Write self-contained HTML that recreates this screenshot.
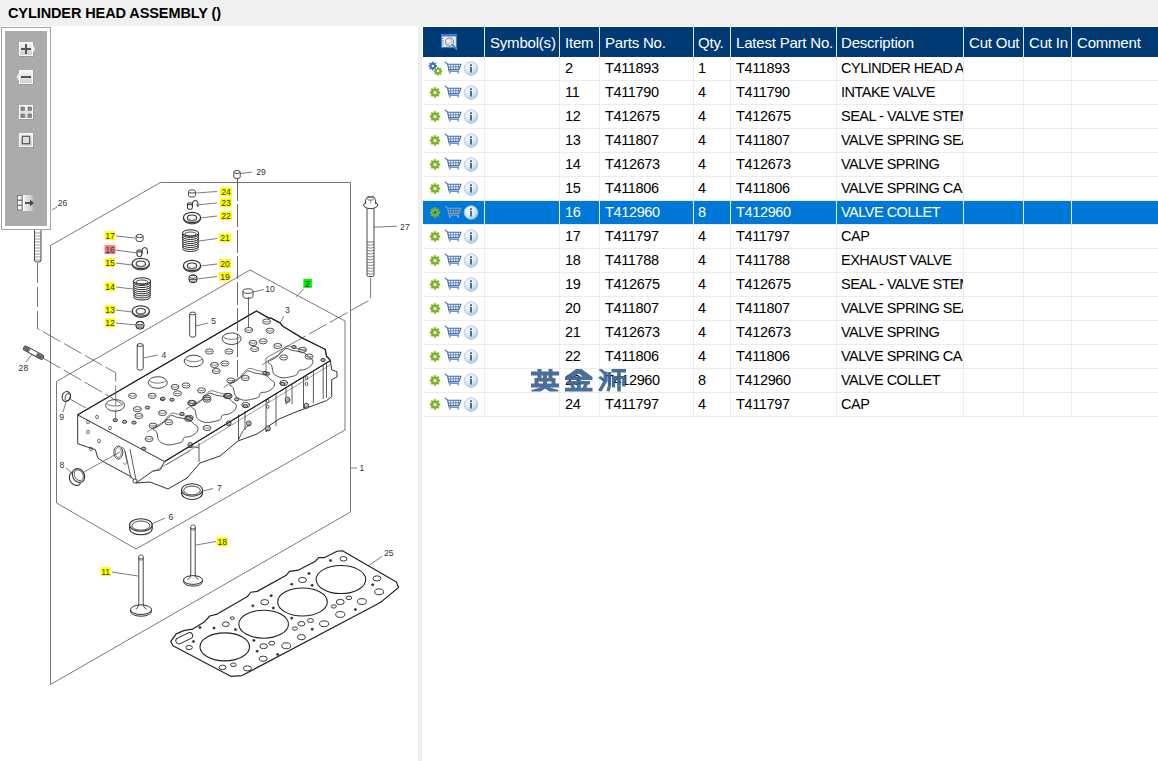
<!DOCTYPE html>
<html><head><meta charset="utf-8">
<style>
*{margin:0;padding:0;box-sizing:border-box}
html,body{width:1158px;height:761px;overflow:hidden;background:#fff;font-family:"Liberation Sans",sans-serif}
.a{position:absolute}
.t{position:absolute;white-space:nowrap;font-size:14.5px;line-height:16px;color:#000;letter-spacing:-0.35px}
.h{position:absolute;white-space:nowrap;font-size:15px;line-height:16px;color:#fff;letter-spacing:-0.2px}
</style></head><body>

<div class="a" style="left:0;top:0;width:1158px;height:26px;background:#f0f0f0"></div>
<div class="t" style="left:8px;top:5px;font-size:14.5px;font-weight:bold;letter-spacing:-0.1px">CYLINDER HEAD ASSEMBLY ()</div>
<div class="a" style="left:418px;top:26px;width:4px;height:735px;background:#efefef"></div>
<div class="a" style="left:423px;top:27px;width:735px;height:30px;background:#003a75"></div>
<div class="a" style="left:484px;top:27px;width:1px;height:30px;background:#dfe6ef"></div>
<div class="a" style="left:559px;top:27px;width:1px;height:30px;background:#dfe6ef"></div>
<div class="a" style="left:599px;top:27px;width:1px;height:30px;background:#dfe6ef"></div>
<div class="a" style="left:693px;top:27px;width:1px;height:30px;background:#dfe6ef"></div>
<div class="a" style="left:730px;top:27px;width:1px;height:30px;background:#dfe6ef"></div>
<div class="a" style="left:836px;top:27px;width:1px;height:30px;background:#dfe6ef"></div>
<div class="a" style="left:963px;top:27px;width:1px;height:30px;background:#dfe6ef"></div>
<div class="a" style="left:1023px;top:27px;width:1px;height:30px;background:#dfe6ef"></div>
<div class="a" style="left:1071px;top:27px;width:1px;height:30px;background:#dfe6ef"></div>
<div class="a" style="left:423px;top:80px;width:735px;height:1px;background:#ececec"></div>
<div class="a" style="left:423px;top:104px;width:735px;height:1px;background:#ececec"></div>
<div class="a" style="left:423px;top:128px;width:735px;height:1px;background:#ececec"></div>
<div class="a" style="left:423px;top:152px;width:735px;height:1px;background:#ececec"></div>
<div class="a" style="left:423px;top:176px;width:735px;height:1px;background:#ececec"></div>
<div class="a" style="left:423px;top:200px;width:735px;height:1px;background:#ececec"></div>
<div class="a" style="left:423px;top:201px;width:735px;height:23px;background:#0078d7"></div>
<div class="a" style="left:423px;top:224px;width:735px;height:1px;background:#ececec"></div>
<div class="a" style="left:423px;top:248px;width:735px;height:1px;background:#ececec"></div>
<div class="a" style="left:423px;top:272px;width:735px;height:1px;background:#ececec"></div>
<div class="a" style="left:423px;top:296px;width:735px;height:1px;background:#ececec"></div>
<div class="a" style="left:423px;top:320px;width:735px;height:1px;background:#ececec"></div>
<div class="a" style="left:423px;top:344px;width:735px;height:1px;background:#ececec"></div>
<div class="a" style="left:423px;top:368px;width:735px;height:1px;background:#ececec"></div>
<div class="a" style="left:423px;top:392px;width:735px;height:1px;background:#ececec"></div>
<div class="a" style="left:423px;top:416px;width:735px;height:1px;background:#ececec"></div>
<div class="a" style="left:484px;top:57px;width:1px;height:360px;background:#ececec"></div>
<div class="a" style="left:559px;top:57px;width:1px;height:360px;background:#ececec"></div>
<div class="a" style="left:599px;top:57px;width:1px;height:360px;background:#ececec"></div>
<div class="a" style="left:693px;top:57px;width:1px;height:360px;background:#ececec"></div>
<div class="a" style="left:730px;top:57px;width:1px;height:360px;background:#ececec"></div>
<div class="a" style="left:836px;top:57px;width:1px;height:360px;background:#ececec"></div>
<div class="a" style="left:963px;top:57px;width:1px;height:360px;background:#ececec"></div>
<div class="a" style="left:1023px;top:57px;width:1px;height:360px;background:#ececec"></div>
<div class="a" style="left:1071px;top:57px;width:1px;height:360px;background:#ececec"></div>
<div class="a" style="left:484px;top:201px;width:1px;height:23px;background:#e6f0fa"></div>
<div class="a" style="left:559px;top:201px;width:1px;height:23px;background:#e6f0fa"></div>
<div class="a" style="left:599px;top:201px;width:1px;height:23px;background:#e6f0fa"></div>
<div class="a" style="left:693px;top:201px;width:1px;height:23px;background:#e6f0fa"></div>
<div class="a" style="left:730px;top:201px;width:1px;height:23px;background:#e6f0fa"></div>
<div class="a" style="left:836px;top:201px;width:1px;height:23px;background:#e6f0fa"></div>
<div class="a" style="left:963px;top:201px;width:1px;height:23px;background:#e6f0fa"></div>
<div class="a" style="left:1023px;top:201px;width:1px;height:23px;background:#e6f0fa"></div>
<div class="a" style="left:1071px;top:201px;width:1px;height:23px;background:#e6f0fa"></div>
<div class="h" style="left:490px;top:34.5px">Symbol(s)</div>
<div class="h" style="left:565px;top:34.5px">Item</div>
<div class="h" style="left:605px;top:34.5px">Parts No.</div>
<div class="h" style="left:698px;top:34.5px">Qty.</div>
<div class="h" style="left:736px;top:34.5px">Latest Part No.</div>
<div class="h" style="left:841px;top:34.5px">Description</div>
<div class="h" style="left:969px;top:34.5px">Cut Out</div>
<div class="h" style="left:1029px;top:34.5px">Cut In</div>
<div class="h" style="left:1077px;top:34.5px">Comment</div>
<div class="t" style="left:565px;top:59.6px;color:#000">2</div>
<div class="t" style="left:605px;top:59.6px;color:#000">T411893</div>
<div class="t" style="left:698px;top:59.6px;color:#000">1</div>
<div class="t" style="left:736px;top:59.6px;color:#000">T411893</div>
<div class="t" style="left:841px;top:59.6px;width:122px;overflow:hidden;letter-spacing:-0.5px;color:#000">CYLINDER HEAD ASSEMBLY</div>
<div class="t" style="left:565px;top:83.6px;color:#000">11</div>
<div class="t" style="left:605px;top:83.6px;color:#000">T411790</div>
<div class="t" style="left:698px;top:83.6px;color:#000">4</div>
<div class="t" style="left:736px;top:83.6px;color:#000">T411790</div>
<div class="t" style="left:841px;top:83.6px;width:122px;overflow:hidden;letter-spacing:-0.5px;color:#000">INTAKE VALVE</div>
<div class="t" style="left:565px;top:107.6px;color:#000">12</div>
<div class="t" style="left:605px;top:107.6px;color:#000">T412675</div>
<div class="t" style="left:698px;top:107.6px;color:#000">4</div>
<div class="t" style="left:736px;top:107.6px;color:#000">T412675</div>
<div class="t" style="left:841px;top:107.6px;width:122px;overflow:hidden;letter-spacing:-0.5px;color:#000">SEAL - VALVE STEM</div>
<div class="t" style="left:565px;top:131.6px;color:#000">13</div>
<div class="t" style="left:605px;top:131.6px;color:#000">T411807</div>
<div class="t" style="left:698px;top:131.6px;color:#000">4</div>
<div class="t" style="left:736px;top:131.6px;color:#000">T411807</div>
<div class="t" style="left:841px;top:131.6px;width:122px;overflow:hidden;letter-spacing:-0.5px;color:#000">VALVE SPRING SEAT</div>
<div class="t" style="left:565px;top:155.6px;color:#000">14</div>
<div class="t" style="left:605px;top:155.6px;color:#000">T412673</div>
<div class="t" style="left:698px;top:155.6px;color:#000">4</div>
<div class="t" style="left:736px;top:155.6px;color:#000">T412673</div>
<div class="t" style="left:841px;top:155.6px;width:122px;overflow:hidden;letter-spacing:-0.5px;color:#000">VALVE SPRING</div>
<div class="t" style="left:565px;top:179.6px;color:#000">15</div>
<div class="t" style="left:605px;top:179.6px;color:#000">T411806</div>
<div class="t" style="left:698px;top:179.6px;color:#000">4</div>
<div class="t" style="left:736px;top:179.6px;color:#000">T411806</div>
<div class="t" style="left:841px;top:179.6px;width:122px;overflow:hidden;letter-spacing:-0.5px;color:#000">VALVE SPRING CAP</div>
<div class="t" style="left:565px;top:203.6px;color:#fff">16</div>
<div class="t" style="left:605px;top:203.6px;color:#fff">T412960</div>
<div class="t" style="left:698px;top:203.6px;color:#fff">8</div>
<div class="t" style="left:736px;top:203.6px;color:#fff">T412960</div>
<div class="t" style="left:841px;top:203.6px;width:122px;overflow:hidden;letter-spacing:-0.5px;color:#fff">VALVE COLLET</div>
<div class="t" style="left:565px;top:227.6px;color:#000">17</div>
<div class="t" style="left:605px;top:227.6px;color:#000">T411797</div>
<div class="t" style="left:698px;top:227.6px;color:#000">4</div>
<div class="t" style="left:736px;top:227.6px;color:#000">T411797</div>
<div class="t" style="left:841px;top:227.6px;width:122px;overflow:hidden;letter-spacing:-0.5px;color:#000">CAP</div>
<div class="t" style="left:565px;top:251.6px;color:#000">18</div>
<div class="t" style="left:605px;top:251.6px;color:#000">T411788</div>
<div class="t" style="left:698px;top:251.6px;color:#000">4</div>
<div class="t" style="left:736px;top:251.6px;color:#000">T411788</div>
<div class="t" style="left:841px;top:251.6px;width:122px;overflow:hidden;letter-spacing:-0.5px;color:#000">EXHAUST VALVE</div>
<div class="t" style="left:565px;top:275.6px;color:#000">19</div>
<div class="t" style="left:605px;top:275.6px;color:#000">T412675</div>
<div class="t" style="left:698px;top:275.6px;color:#000">4</div>
<div class="t" style="left:736px;top:275.6px;color:#000">T412675</div>
<div class="t" style="left:841px;top:275.6px;width:122px;overflow:hidden;letter-spacing:-0.5px;color:#000">SEAL - VALVE STEM</div>
<div class="t" style="left:565px;top:299.6px;color:#000">20</div>
<div class="t" style="left:605px;top:299.6px;color:#000">T411807</div>
<div class="t" style="left:698px;top:299.6px;color:#000">4</div>
<div class="t" style="left:736px;top:299.6px;color:#000">T411807</div>
<div class="t" style="left:841px;top:299.6px;width:122px;overflow:hidden;letter-spacing:-0.5px;color:#000">VALVE SPRING SEAT</div>
<div class="t" style="left:565px;top:323.6px;color:#000">21</div>
<div class="t" style="left:605px;top:323.6px;color:#000">T412673</div>
<div class="t" style="left:698px;top:323.6px;color:#000">4</div>
<div class="t" style="left:736px;top:323.6px;color:#000">T412673</div>
<div class="t" style="left:841px;top:323.6px;width:122px;overflow:hidden;letter-spacing:-0.5px;color:#000">VALVE SPRING</div>
<div class="t" style="left:565px;top:347.6px;color:#000">22</div>
<div class="t" style="left:605px;top:347.6px;color:#000">T411806</div>
<div class="t" style="left:698px;top:347.6px;color:#000">4</div>
<div class="t" style="left:736px;top:347.6px;color:#000">T411806</div>
<div class="t" style="left:841px;top:347.6px;width:122px;overflow:hidden;letter-spacing:-0.5px;color:#000">VALVE SPRING CAP</div>
<div class="t" style="left:565px;top:371.6px;color:#000">23</div>
<div class="t" style="left:605px;top:371.6px;color:#000">T412960</div>
<div class="t" style="left:698px;top:371.6px;color:#000">8</div>
<div class="t" style="left:736px;top:371.6px;color:#000">T412960</div>
<div class="t" style="left:841px;top:371.6px;width:122px;overflow:hidden;letter-spacing:-0.5px;color:#000">VALVE COLLET</div>
<div class="t" style="left:565px;top:395.6px;color:#000">24</div>
<div class="t" style="left:605px;top:395.6px;color:#000">T411797</div>
<div class="t" style="left:698px;top:395.6px;color:#000">4</div>
<div class="t" style="left:736px;top:395.6px;color:#000">T411797</div>
<div class="t" style="left:841px;top:395.6px;width:122px;overflow:hidden;letter-spacing:-0.5px;color:#000">CAP</div>
<svg class="a" style="left:0;top:0" width="1158" height="761" viewBox="0 0 1158 761"><defs>
<radialGradient id="ig" cx="0.4" cy="0.35" r="0.7"><stop offset="0" stop-color="#ffffff"/><stop offset="0.6" stop-color="#dbe7f3"/><stop offset="1" stop-color="#9fbfdf"/></radialGradient>
<linearGradient id="bg" x1="0" y1="0" x2="0" y2="1"><stop offset="0" stop-color="#f6f6f6"/><stop offset="1" stop-color="#cfcfcf"/></linearGradient>
<linearGradient id="fade" x1="0" y1="0" x2="1" y2="0"><stop offset="0" stop-color="#f4f4f4"/><stop offset="0.7" stop-color="#d0d0d0"/><stop offset="1" stop-color="#ababab"/></linearGradient>
</defs>
<path d="M437.02,65.16 L437.02,66.84 L435.86,66.93 L435.62,67.51 L436.38,68.39 L435.19,69.58 L434.31,68.82 L433.73,69.06 L433.64,70.22 L431.96,70.22 L431.87,69.06 L431.29,68.82 L430.41,69.58 L429.22,68.39 L429.98,67.51 L429.74,66.93 L428.58,66.84 L428.58,65.16 L429.74,65.07 L429.98,64.49 L429.22,63.61 L430.41,62.42 L431.29,63.18 L431.87,62.94 L431.96,61.78 L433.64,61.78 L433.73,62.94 L434.31,63.18 L435.19,62.42 L436.38,63.61 L435.62,64.49 L435.86,65.07Z" fill="#2f6fd8"/><circle cx="432.8" cy="66.0" r="1.3" fill="#fff"/>
<path d="M442.22,70.46 L442.22,72.14 L441.06,72.23 L440.82,72.81 L441.58,73.69 L440.39,74.88 L439.51,74.12 L438.93,74.36 L438.84,75.52 L437.16,75.52 L437.07,74.36 L436.49,74.12 L435.61,74.88 L434.42,73.69 L435.18,72.81 L434.94,72.23 L433.78,72.14 L433.78,70.46 L434.94,70.37 L435.18,69.79 L434.42,68.91 L435.61,67.72 L436.49,68.48 L437.07,68.24 L437.16,67.08 L438.84,67.08 L438.93,68.24 L439.51,68.48 L440.39,67.72 L441.58,68.91 L440.82,69.79 L441.06,70.37Z" fill="#73b022"/><circle cx="438" cy="71.0" r="1.3" fill="#fff"/>
<g fill="none" stroke="#3f6fa6" stroke-width="1.1" stroke-linejoin="round"><path d="M445,61.8 L447.6,64.2 L449.2,71.3 L459.2,71.3"/><path d="M447.4,64.2 L461,64.2 L458.8,69.6 L448.7,69.6"/><path d="M448,66.9 H460 M450.6,64.4 V69.4 M453.2,64.4 V69.4 M455.8,64.4 V69.4 M458.3,64.4 V68.8" stroke-width="0.8"/><path d="M449.8,71.8 v1.6 M458.2,71.8 v1.6" stroke-width="1.6" stroke="#6f9fd6"/></g>
<circle cx="471" cy="68.5" r="6.8" fill="url(#ig)" stroke="#a9c5e2" stroke-width="0.8"/><rect x="470" y="64.3" width="2" height="1.8" fill="#3d6da3"/><rect x="470" y="66.9" width="2" height="5.6" fill="#3d6da3"/>
<path d="M440.20,91.47 L440.20,93.53 L438.83,93.66 L438.53,94.39 L439.41,95.44 L437.94,96.91 L436.89,96.03 L436.16,96.33 L436.03,97.70 L433.97,97.70 L433.84,96.33 L433.11,96.03 L432.06,96.91 L430.59,95.44 L431.47,94.39 L431.17,93.66 L429.80,93.53 L429.80,91.47 L431.17,91.34 L431.47,90.61 L430.59,89.56 L432.06,88.09 L433.11,88.97 L433.84,88.67 L433.97,87.30 L436.03,87.30 L436.16,88.67 L436.89,88.97 L437.94,88.09 L439.41,89.56 L438.53,90.61 L438.83,91.34Z" fill="#7ab526"/><circle cx="435" cy="92.5" r="1.6" fill="#fff"/>
<g fill="none" stroke="#3f6fa6" stroke-width="1.1" stroke-linejoin="round"><path d="M445,85.8 L447.6,88.2 L449.2,95.3 L459.2,95.3"/><path d="M447.4,88.2 L461,88.2 L458.8,93.6 L448.7,93.6"/><path d="M448,90.9 H460 M450.6,88.4 V93.4 M453.2,88.4 V93.4 M455.8,88.4 V93.4 M458.3,88.4 V92.8" stroke-width="0.8"/><path d="M449.8,95.8 v1.6 M458.2,95.8 v1.6" stroke-width="1.6" stroke="#6f9fd6"/></g>
<circle cx="471" cy="92.5" r="6.8" fill="url(#ig)" stroke="#a9c5e2" stroke-width="0.8"/><rect x="470" y="88.3" width="2" height="1.8" fill="#3d6da3"/><rect x="470" y="90.9" width="2" height="5.6" fill="#3d6da3"/>
<path d="M440.20,115.47 L440.20,117.53 L438.83,117.66 L438.53,118.39 L439.41,119.44 L437.94,120.91 L436.89,120.03 L436.16,120.33 L436.03,121.70 L433.97,121.70 L433.84,120.33 L433.11,120.03 L432.06,120.91 L430.59,119.44 L431.47,118.39 L431.17,117.66 L429.80,117.53 L429.80,115.47 L431.17,115.34 L431.47,114.61 L430.59,113.56 L432.06,112.09 L433.11,112.97 L433.84,112.67 L433.97,111.30 L436.03,111.30 L436.16,112.67 L436.89,112.97 L437.94,112.09 L439.41,113.56 L438.53,114.61 L438.83,115.34Z" fill="#7ab526"/><circle cx="435" cy="116.5" r="1.6" fill="#fff"/>
<g fill="none" stroke="#3f6fa6" stroke-width="1.1" stroke-linejoin="round"><path d="M445,109.8 L447.6,112.2 L449.2,119.3 L459.2,119.3"/><path d="M447.4,112.2 L461,112.2 L458.8,117.6 L448.7,117.6"/><path d="M448,114.9 H460 M450.6,112.4 V117.4 M453.2,112.4 V117.4 M455.8,112.4 V117.4 M458.3,112.4 V116.8" stroke-width="0.8"/><path d="M449.8,119.8 v1.6 M458.2,119.8 v1.6" stroke-width="1.6" stroke="#6f9fd6"/></g>
<circle cx="471" cy="116.5" r="6.8" fill="url(#ig)" stroke="#a9c5e2" stroke-width="0.8"/><rect x="470" y="112.3" width="2" height="1.8" fill="#3d6da3"/><rect x="470" y="114.9" width="2" height="5.6" fill="#3d6da3"/>
<path d="M440.20,139.47 L440.20,141.53 L438.83,141.66 L438.53,142.39 L439.41,143.44 L437.94,144.91 L436.89,144.03 L436.16,144.33 L436.03,145.70 L433.97,145.70 L433.84,144.33 L433.11,144.03 L432.06,144.91 L430.59,143.44 L431.47,142.39 L431.17,141.66 L429.80,141.53 L429.80,139.47 L431.17,139.34 L431.47,138.61 L430.59,137.56 L432.06,136.09 L433.11,136.97 L433.84,136.67 L433.97,135.30 L436.03,135.30 L436.16,136.67 L436.89,136.97 L437.94,136.09 L439.41,137.56 L438.53,138.61 L438.83,139.34Z" fill="#7ab526"/><circle cx="435" cy="140.5" r="1.6" fill="#fff"/>
<g fill="none" stroke="#3f6fa6" stroke-width="1.1" stroke-linejoin="round"><path d="M445,133.8 L447.6,136.2 L449.2,143.3 L459.2,143.3"/><path d="M447.4,136.2 L461,136.2 L458.8,141.6 L448.7,141.6"/><path d="M448,138.9 H460 M450.6,136.4 V141.4 M453.2,136.4 V141.4 M455.8,136.4 V141.4 M458.3,136.4 V140.8" stroke-width="0.8"/><path d="M449.8,143.8 v1.6 M458.2,143.8 v1.6" stroke-width="1.6" stroke="#6f9fd6"/></g>
<circle cx="471" cy="140.5" r="6.8" fill="url(#ig)" stroke="#a9c5e2" stroke-width="0.8"/><rect x="470" y="136.3" width="2" height="1.8" fill="#3d6da3"/><rect x="470" y="138.9" width="2" height="5.6" fill="#3d6da3"/>
<path d="M440.20,163.47 L440.20,165.53 L438.83,165.66 L438.53,166.39 L439.41,167.44 L437.94,168.91 L436.89,168.03 L436.16,168.33 L436.03,169.70 L433.97,169.70 L433.84,168.33 L433.11,168.03 L432.06,168.91 L430.59,167.44 L431.47,166.39 L431.17,165.66 L429.80,165.53 L429.80,163.47 L431.17,163.34 L431.47,162.61 L430.59,161.56 L432.06,160.09 L433.11,160.97 L433.84,160.67 L433.97,159.30 L436.03,159.30 L436.16,160.67 L436.89,160.97 L437.94,160.09 L439.41,161.56 L438.53,162.61 L438.83,163.34Z" fill="#7ab526"/><circle cx="435" cy="164.5" r="1.6" fill="#fff"/>
<g fill="none" stroke="#3f6fa6" stroke-width="1.1" stroke-linejoin="round"><path d="M445,157.8 L447.6,160.2 L449.2,167.3 L459.2,167.3"/><path d="M447.4,160.2 L461,160.2 L458.8,165.6 L448.7,165.6"/><path d="M448,162.9 H460 M450.6,160.4 V165.4 M453.2,160.4 V165.4 M455.8,160.4 V165.4 M458.3,160.4 V164.8" stroke-width="0.8"/><path d="M449.8,167.8 v1.6 M458.2,167.8 v1.6" stroke-width="1.6" stroke="#6f9fd6"/></g>
<circle cx="471" cy="164.5" r="6.8" fill="url(#ig)" stroke="#a9c5e2" stroke-width="0.8"/><rect x="470" y="160.3" width="2" height="1.8" fill="#3d6da3"/><rect x="470" y="162.9" width="2" height="5.6" fill="#3d6da3"/>
<path d="M440.20,187.47 L440.20,189.53 L438.83,189.66 L438.53,190.39 L439.41,191.44 L437.94,192.91 L436.89,192.03 L436.16,192.33 L436.03,193.70 L433.97,193.70 L433.84,192.33 L433.11,192.03 L432.06,192.91 L430.59,191.44 L431.47,190.39 L431.17,189.66 L429.80,189.53 L429.80,187.47 L431.17,187.34 L431.47,186.61 L430.59,185.56 L432.06,184.09 L433.11,184.97 L433.84,184.67 L433.97,183.30 L436.03,183.30 L436.16,184.67 L436.89,184.97 L437.94,184.09 L439.41,185.56 L438.53,186.61 L438.83,187.34Z" fill="#7ab526"/><circle cx="435" cy="188.5" r="1.6" fill="#fff"/>
<g fill="none" stroke="#3f6fa6" stroke-width="1.1" stroke-linejoin="round"><path d="M445,181.8 L447.6,184.2 L449.2,191.3 L459.2,191.3"/><path d="M447.4,184.2 L461,184.2 L458.8,189.6 L448.7,189.6"/><path d="M448,186.9 H460 M450.6,184.4 V189.4 M453.2,184.4 V189.4 M455.8,184.4 V189.4 M458.3,184.4 V188.8" stroke-width="0.8"/><path d="M449.8,191.8 v1.6 M458.2,191.8 v1.6" stroke-width="1.6" stroke="#6f9fd6"/></g>
<circle cx="471" cy="188.5" r="6.8" fill="url(#ig)" stroke="#a9c5e2" stroke-width="0.8"/><rect x="470" y="184.3" width="2" height="1.8" fill="#3d6da3"/><rect x="470" y="186.9" width="2" height="5.6" fill="#3d6da3"/>
<path d="M440.20,211.47 L440.20,213.53 L438.83,213.66 L438.53,214.39 L439.41,215.44 L437.94,216.91 L436.89,216.03 L436.16,216.33 L436.03,217.70 L433.97,217.70 L433.84,216.33 L433.11,216.03 L432.06,216.91 L430.59,215.44 L431.47,214.39 L431.17,213.66 L429.80,213.53 L429.80,211.47 L431.17,211.34 L431.47,210.61 L430.59,209.56 L432.06,208.09 L433.11,208.97 L433.84,208.67 L433.97,207.30 L436.03,207.30 L436.16,208.67 L436.89,208.97 L437.94,208.09 L439.41,209.56 L438.53,210.61 L438.83,211.34Z" fill="#7ab526"/><circle cx="435" cy="212.5" r="1.6" fill="#0078d7"/>
<g fill="none" stroke="#8a9bb0" stroke-width="1.1" stroke-linejoin="round"><path d="M445,205.8 L447.6,208.2 L449.2,215.3 L459.2,215.3"/><path d="M447.4,208.2 L461,208.2 L458.8,213.6 L448.7,213.6"/><path d="M448,210.9 H460 M450.6,208.4 V213.4 M453.2,208.4 V213.4 M455.8,208.4 V213.4 M458.3,208.4 V212.8" stroke-width="0.8"/><path d="M449.8,215.8 v1.6 M458.2,215.8 v1.6" stroke-width="1.6" stroke="#9fb6cc"/></g>
<circle cx="471" cy="212.5" r="6.8" fill="url(#ig)" stroke="#a9c5e2" stroke-width="0.8"/><rect x="470" y="208.3" width="2" height="1.8" fill="#3d6da3"/><rect x="470" y="210.9" width="2" height="5.6" fill="#3d6da3"/>
<path d="M440.20,235.47 L440.20,237.53 L438.83,237.66 L438.53,238.39 L439.41,239.44 L437.94,240.91 L436.89,240.03 L436.16,240.33 L436.03,241.70 L433.97,241.70 L433.84,240.33 L433.11,240.03 L432.06,240.91 L430.59,239.44 L431.47,238.39 L431.17,237.66 L429.80,237.53 L429.80,235.47 L431.17,235.34 L431.47,234.61 L430.59,233.56 L432.06,232.09 L433.11,232.97 L433.84,232.67 L433.97,231.30 L436.03,231.30 L436.16,232.67 L436.89,232.97 L437.94,232.09 L439.41,233.56 L438.53,234.61 L438.83,235.34Z" fill="#7ab526"/><circle cx="435" cy="236.5" r="1.6" fill="#fff"/>
<g fill="none" stroke="#3f6fa6" stroke-width="1.1" stroke-linejoin="round"><path d="M445,229.8 L447.6,232.2 L449.2,239.3 L459.2,239.3"/><path d="M447.4,232.2 L461,232.2 L458.8,237.6 L448.7,237.6"/><path d="M448,234.9 H460 M450.6,232.4 V237.4 M453.2,232.4 V237.4 M455.8,232.4 V237.4 M458.3,232.4 V236.8" stroke-width="0.8"/><path d="M449.8,239.8 v1.6 M458.2,239.8 v1.6" stroke-width="1.6" stroke="#6f9fd6"/></g>
<circle cx="471" cy="236.5" r="6.8" fill="url(#ig)" stroke="#a9c5e2" stroke-width="0.8"/><rect x="470" y="232.3" width="2" height="1.8" fill="#3d6da3"/><rect x="470" y="234.9" width="2" height="5.6" fill="#3d6da3"/>
<path d="M440.20,259.47 L440.20,261.53 L438.83,261.66 L438.53,262.39 L439.41,263.44 L437.94,264.91 L436.89,264.03 L436.16,264.33 L436.03,265.70 L433.97,265.70 L433.84,264.33 L433.11,264.03 L432.06,264.91 L430.59,263.44 L431.47,262.39 L431.17,261.66 L429.80,261.53 L429.80,259.47 L431.17,259.34 L431.47,258.61 L430.59,257.56 L432.06,256.09 L433.11,256.97 L433.84,256.67 L433.97,255.30 L436.03,255.30 L436.16,256.67 L436.89,256.97 L437.94,256.09 L439.41,257.56 L438.53,258.61 L438.83,259.34Z" fill="#7ab526"/><circle cx="435" cy="260.5" r="1.6" fill="#fff"/>
<g fill="none" stroke="#3f6fa6" stroke-width="1.1" stroke-linejoin="round"><path d="M445,253.8 L447.6,256.2 L449.2,263.3 L459.2,263.3"/><path d="M447.4,256.2 L461,256.2 L458.8,261.6 L448.7,261.6"/><path d="M448,258.9 H460 M450.6,256.4 V261.4 M453.2,256.4 V261.4 M455.8,256.4 V261.4 M458.3,256.4 V260.8" stroke-width="0.8"/><path d="M449.8,263.8 v1.6 M458.2,263.8 v1.6" stroke-width="1.6" stroke="#6f9fd6"/></g>
<circle cx="471" cy="260.5" r="6.8" fill="url(#ig)" stroke="#a9c5e2" stroke-width="0.8"/><rect x="470" y="256.3" width="2" height="1.8" fill="#3d6da3"/><rect x="470" y="258.9" width="2" height="5.6" fill="#3d6da3"/>
<path d="M440.20,283.47 L440.20,285.53 L438.83,285.66 L438.53,286.39 L439.41,287.44 L437.94,288.91 L436.89,288.03 L436.16,288.33 L436.03,289.70 L433.97,289.70 L433.84,288.33 L433.11,288.03 L432.06,288.91 L430.59,287.44 L431.47,286.39 L431.17,285.66 L429.80,285.53 L429.80,283.47 L431.17,283.34 L431.47,282.61 L430.59,281.56 L432.06,280.09 L433.11,280.97 L433.84,280.67 L433.97,279.30 L436.03,279.30 L436.16,280.67 L436.89,280.97 L437.94,280.09 L439.41,281.56 L438.53,282.61 L438.83,283.34Z" fill="#7ab526"/><circle cx="435" cy="284.5" r="1.6" fill="#fff"/>
<g fill="none" stroke="#3f6fa6" stroke-width="1.1" stroke-linejoin="round"><path d="M445,277.8 L447.6,280.2 L449.2,287.3 L459.2,287.3"/><path d="M447.4,280.2 L461,280.2 L458.8,285.6 L448.7,285.6"/><path d="M448,282.9 H460 M450.6,280.4 V285.4 M453.2,280.4 V285.4 M455.8,280.4 V285.4 M458.3,280.4 V284.8" stroke-width="0.8"/><path d="M449.8,287.8 v1.6 M458.2,287.8 v1.6" stroke-width="1.6" stroke="#6f9fd6"/></g>
<circle cx="471" cy="284.5" r="6.8" fill="url(#ig)" stroke="#a9c5e2" stroke-width="0.8"/><rect x="470" y="280.3" width="2" height="1.8" fill="#3d6da3"/><rect x="470" y="282.9" width="2" height="5.6" fill="#3d6da3"/>
<path d="M440.20,307.47 L440.20,309.53 L438.83,309.66 L438.53,310.39 L439.41,311.44 L437.94,312.91 L436.89,312.03 L436.16,312.33 L436.03,313.70 L433.97,313.70 L433.84,312.33 L433.11,312.03 L432.06,312.91 L430.59,311.44 L431.47,310.39 L431.17,309.66 L429.80,309.53 L429.80,307.47 L431.17,307.34 L431.47,306.61 L430.59,305.56 L432.06,304.09 L433.11,304.97 L433.84,304.67 L433.97,303.30 L436.03,303.30 L436.16,304.67 L436.89,304.97 L437.94,304.09 L439.41,305.56 L438.53,306.61 L438.83,307.34Z" fill="#7ab526"/><circle cx="435" cy="308.5" r="1.6" fill="#fff"/>
<g fill="none" stroke="#3f6fa6" stroke-width="1.1" stroke-linejoin="round"><path d="M445,301.8 L447.6,304.2 L449.2,311.3 L459.2,311.3"/><path d="M447.4,304.2 L461,304.2 L458.8,309.6 L448.7,309.6"/><path d="M448,306.9 H460 M450.6,304.4 V309.4 M453.2,304.4 V309.4 M455.8,304.4 V309.4 M458.3,304.4 V308.8" stroke-width="0.8"/><path d="M449.8,311.8 v1.6 M458.2,311.8 v1.6" stroke-width="1.6" stroke="#6f9fd6"/></g>
<circle cx="471" cy="308.5" r="6.8" fill="url(#ig)" stroke="#a9c5e2" stroke-width="0.8"/><rect x="470" y="304.3" width="2" height="1.8" fill="#3d6da3"/><rect x="470" y="306.9" width="2" height="5.6" fill="#3d6da3"/>
<path d="M440.20,331.47 L440.20,333.53 L438.83,333.66 L438.53,334.39 L439.41,335.44 L437.94,336.91 L436.89,336.03 L436.16,336.33 L436.03,337.70 L433.97,337.70 L433.84,336.33 L433.11,336.03 L432.06,336.91 L430.59,335.44 L431.47,334.39 L431.17,333.66 L429.80,333.53 L429.80,331.47 L431.17,331.34 L431.47,330.61 L430.59,329.56 L432.06,328.09 L433.11,328.97 L433.84,328.67 L433.97,327.30 L436.03,327.30 L436.16,328.67 L436.89,328.97 L437.94,328.09 L439.41,329.56 L438.53,330.61 L438.83,331.34Z" fill="#7ab526"/><circle cx="435" cy="332.5" r="1.6" fill="#fff"/>
<g fill="none" stroke="#3f6fa6" stroke-width="1.1" stroke-linejoin="round"><path d="M445,325.8 L447.6,328.2 L449.2,335.3 L459.2,335.3"/><path d="M447.4,328.2 L461,328.2 L458.8,333.6 L448.7,333.6"/><path d="M448,330.9 H460 M450.6,328.4 V333.4 M453.2,328.4 V333.4 M455.8,328.4 V333.4 M458.3,328.4 V332.8" stroke-width="0.8"/><path d="M449.8,335.8 v1.6 M458.2,335.8 v1.6" stroke-width="1.6" stroke="#6f9fd6"/></g>
<circle cx="471" cy="332.5" r="6.8" fill="url(#ig)" stroke="#a9c5e2" stroke-width="0.8"/><rect x="470" y="328.3" width="2" height="1.8" fill="#3d6da3"/><rect x="470" y="330.9" width="2" height="5.6" fill="#3d6da3"/>
<path d="M440.20,355.47 L440.20,357.53 L438.83,357.66 L438.53,358.39 L439.41,359.44 L437.94,360.91 L436.89,360.03 L436.16,360.33 L436.03,361.70 L433.97,361.70 L433.84,360.33 L433.11,360.03 L432.06,360.91 L430.59,359.44 L431.47,358.39 L431.17,357.66 L429.80,357.53 L429.80,355.47 L431.17,355.34 L431.47,354.61 L430.59,353.56 L432.06,352.09 L433.11,352.97 L433.84,352.67 L433.97,351.30 L436.03,351.30 L436.16,352.67 L436.89,352.97 L437.94,352.09 L439.41,353.56 L438.53,354.61 L438.83,355.34Z" fill="#7ab526"/><circle cx="435" cy="356.5" r="1.6" fill="#fff"/>
<g fill="none" stroke="#3f6fa6" stroke-width="1.1" stroke-linejoin="round"><path d="M445,349.8 L447.6,352.2 L449.2,359.3 L459.2,359.3"/><path d="M447.4,352.2 L461,352.2 L458.8,357.6 L448.7,357.6"/><path d="M448,354.9 H460 M450.6,352.4 V357.4 M453.2,352.4 V357.4 M455.8,352.4 V357.4 M458.3,352.4 V356.8" stroke-width="0.8"/><path d="M449.8,359.8 v1.6 M458.2,359.8 v1.6" stroke-width="1.6" stroke="#6f9fd6"/></g>
<circle cx="471" cy="356.5" r="6.8" fill="url(#ig)" stroke="#a9c5e2" stroke-width="0.8"/><rect x="470" y="352.3" width="2" height="1.8" fill="#3d6da3"/><rect x="470" y="354.9" width="2" height="5.6" fill="#3d6da3"/>
<path d="M440.20,379.47 L440.20,381.53 L438.83,381.66 L438.53,382.39 L439.41,383.44 L437.94,384.91 L436.89,384.03 L436.16,384.33 L436.03,385.70 L433.97,385.70 L433.84,384.33 L433.11,384.03 L432.06,384.91 L430.59,383.44 L431.47,382.39 L431.17,381.66 L429.80,381.53 L429.80,379.47 L431.17,379.34 L431.47,378.61 L430.59,377.56 L432.06,376.09 L433.11,376.97 L433.84,376.67 L433.97,375.30 L436.03,375.30 L436.16,376.67 L436.89,376.97 L437.94,376.09 L439.41,377.56 L438.53,378.61 L438.83,379.34Z" fill="#7ab526"/><circle cx="435" cy="380.5" r="1.6" fill="#fff"/>
<g fill="none" stroke="#3f6fa6" stroke-width="1.1" stroke-linejoin="round"><path d="M445,373.8 L447.6,376.2 L449.2,383.3 L459.2,383.3"/><path d="M447.4,376.2 L461,376.2 L458.8,381.6 L448.7,381.6"/><path d="M448,378.9 H460 M450.6,376.4 V381.4 M453.2,376.4 V381.4 M455.8,376.4 V381.4 M458.3,376.4 V380.8" stroke-width="0.8"/><path d="M449.8,383.8 v1.6 M458.2,383.8 v1.6" stroke-width="1.6" stroke="#6f9fd6"/></g>
<circle cx="471" cy="380.5" r="6.8" fill="url(#ig)" stroke="#a9c5e2" stroke-width="0.8"/><rect x="470" y="376.3" width="2" height="1.8" fill="#3d6da3"/><rect x="470" y="378.9" width="2" height="5.6" fill="#3d6da3"/>
<path d="M440.20,403.47 L440.20,405.53 L438.83,405.66 L438.53,406.39 L439.41,407.44 L437.94,408.91 L436.89,408.03 L436.16,408.33 L436.03,409.70 L433.97,409.70 L433.84,408.33 L433.11,408.03 L432.06,408.91 L430.59,407.44 L431.47,406.39 L431.17,405.66 L429.80,405.53 L429.80,403.47 L431.17,403.34 L431.47,402.61 L430.59,401.56 L432.06,400.09 L433.11,400.97 L433.84,400.67 L433.97,399.30 L436.03,399.30 L436.16,400.67 L436.89,400.97 L437.94,400.09 L439.41,401.56 L438.53,402.61 L438.83,403.34Z" fill="#7ab526"/><circle cx="435" cy="404.5" r="1.6" fill="#fff"/>
<g fill="none" stroke="#3f6fa6" stroke-width="1.1" stroke-linejoin="round"><path d="M445,397.8 L447.6,400.2 L449.2,407.3 L459.2,407.3"/><path d="M447.4,400.2 L461,400.2 L458.8,405.6 L448.7,405.6"/><path d="M448,402.9 H460 M450.6,400.4 V405.4 M453.2,400.4 V405.4 M455.8,400.4 V405.4 M458.3,400.4 V404.8" stroke-width="0.8"/><path d="M449.8,407.8 v1.6 M458.2,407.8 v1.6" stroke-width="1.6" stroke="#6f9fd6"/></g>
<circle cx="471" cy="404.5" r="6.8" fill="url(#ig)" stroke="#a9c5e2" stroke-width="0.8"/><rect x="470" y="400.3" width="2" height="1.8" fill="#3d6da3"/><rect x="470" y="402.9" width="2" height="5.6" fill="#3d6da3"/>
<rect x="441.5" y="34.5" width="15" height="13" fill="#e8eef6" stroke="#3a7bd0" stroke-width="1.2"/><rect x="441" y="34" width="16" height="2.5" fill="#3a7bd0"/><path d="M443,38 v8" stroke="#3a7bd0" stroke-width="1" stroke-dasharray="1,1"/><circle cx="449.5" cy="42" r="4.2" fill="#d4d4d4" stroke="#8a8a8a" stroke-width="1"/><ellipse cx="448.5" cy="41" rx="2.2" ry="1.6" fill="#f2f2f2"/><path d="M452.5,45 L456.5,49" stroke="#4a86c8" stroke-width="1.8" stroke-linecap="round"/><polygon points="50.5,245.5 160.5,182.5 350.5,182.5 350.5,512 50.5,684.5" fill="none" stroke="#555" stroke-width="0.8" stroke-linejoin="round"/>
<polygon points="56.5,381.5 250,270 345,321 345,430 136,549 56.5,503" fill="none" stroke="#555" stroke-width="0.8" stroke-linejoin="round"/>
<polygon points="136,483 136,476 164.6,461.5 330.4,360.5 331.7,369.8 337,371.7 337,377 331.7,379.6 331.7,396.7 326.5,400.6 312,406 297,411.5 279,419 257,434 238,441 220,456 200,463 187,478 168,489 150,482" fill="#fff" stroke="#333" stroke-width="1.0" stroke-linejoin="round"/>
<polygon points="77.7,414.8 164.6,461.5 160,470 152.8,471 136,483 131.5,477 103,461.5 97.8,458 95.4,449.7 86.6,446.7 77.7,443.7" fill="#fff" stroke="#333" stroke-width="1.0" stroke-linejoin="round"/>
<polygon points="77.7,414.8 256.5,311 268.9,318.1 271,318.1 280.4,323.1 282,325.7 301.5,337.6 305.5,339.6 322.5,348 325.2,349.4 326.5,356 330.4,360.5 164.6,461.5" fill="#fff" stroke="#333" stroke-width="0.8" stroke-linejoin="round"/>
<polyline points="77.7,414.8 256.5,311 268.9,318.1 271,318.1 280.4,323.1 282,325.7 301.5,337.6 305.5,339.6 322.5,348 325.2,349.4 326.5,356 330.4,360.5" fill="none" stroke="#222" stroke-width="1.25" stroke-linejoin="round"/>
<line x1="125" y1="451" x2="131" y2="478" stroke="#333" stroke-width="0.8"/>
<line x1="130" y1="449" x2="136" y2="480" stroke="#333" stroke-width="0.8"/>
<path d="M121,448 Q124,446 125,452 L127,462 Q126,466 123,463" fill="none" stroke="#444" stroke-width="0.7"/>
<ellipse cx="135" cy="481" rx="2" ry="2" fill="#fff" stroke="#333" stroke-width="0.9"/>
<line x1="199" y1="443" x2="199" y2="462" stroke="#333" stroke-width="0.8"/>
<line x1="238.5" y1="414.6" x2="238.5" y2="440" stroke="#333" stroke-width="0.8"/>
<line x1="245" y1="411" x2="245" y2="430" stroke="#333" stroke-width="0.8"/>
<line x1="266" y1="399" x2="266" y2="432" stroke="#333" stroke-width="0.8"/>
<line x1="276" y1="393" x2="276" y2="426" stroke="#333" stroke-width="0.8"/>
<line x1="286" y1="388" x2="286" y2="404" stroke="#333" stroke-width="0.8"/>
<line x1="292" y1="384" x2="292" y2="404" stroke="#333" stroke-width="0.8"/>
<line x1="303.5" y1="377" x2="303.5" y2="408" stroke="#333" stroke-width="0.8"/>
<line x1="313.4" y1="371" x2="313.4" y2="403" stroke="#333" stroke-width="0.8"/>
<line x1="323.2" y1="366" x2="323.2" y2="399" stroke="#333" stroke-width="0.8"/>
<line x1="326.5" y1="364" x2="326.5" y2="398" stroke="#333" stroke-width="0.8"/>
<ellipse cx="190.2" cy="445" rx="2.3" ry="2.5" fill="#fff" stroke="#333" stroke-width="1.0"/>
<ellipse cx="190.5" cy="445.3" rx="1.1" ry="1.2" fill="none" stroke="#333" stroke-width="0.6"/>
<ellipse cx="228.7" cy="423.4" rx="2.3" ry="2.5" fill="#fff" stroke="#333" stroke-width="1.0"/>
<ellipse cx="229.0" cy="423.7" rx="1.1" ry="1.2" fill="none" stroke="#333" stroke-width="0.6"/>
<ellipse cx="248.8" cy="423.4" rx="2.3" ry="2.5" fill="#fff" stroke="#333" stroke-width="1.0"/>
<ellipse cx="249.10000000000002" cy="423.7" rx="1.1" ry="1.2" fill="none" stroke="#333" stroke-width="0.6"/>
<ellipse cx="268" cy="428.4" rx="2.3" ry="2.5" fill="#fff" stroke="#333" stroke-width="1.0"/>
<ellipse cx="268.3" cy="428.7" rx="1.1" ry="1.2" fill="none" stroke="#333" stroke-width="0.6"/>
<ellipse cx="287.6" cy="399.8" rx="2.3" ry="2.5" fill="#fff" stroke="#333" stroke-width="1.0"/>
<ellipse cx="287.90000000000003" cy="400.1" rx="1.1" ry="1.2" fill="none" stroke="#333" stroke-width="0.6"/>
<ellipse cx="306.5" cy="405.7" rx="2.3" ry="2.5" fill="#fff" stroke="#333" stroke-width="1.0"/>
<ellipse cx="306.8" cy="406.0" rx="1.1" ry="1.2" fill="none" stroke="#333" stroke-width="0.6"/>
<ellipse cx="267.7" cy="400.8" rx="1.3" ry="1.7" fill="none" stroke="#333" stroke-width="0.8"/>
<ellipse cx="267.7" cy="406.7" rx="1.3" ry="1.7" fill="none" stroke="#333" stroke-width="0.8"/>
<ellipse cx="306.5" cy="378" rx="1.3" ry="1.7" fill="none" stroke="#333" stroke-width="0.8"/>
<ellipse cx="306.5" cy="384" rx="1.3" ry="1.7" fill="none" stroke="#333" stroke-width="0.8"/>
<path d="M238.5,440 Q243,428 248.8,425.5 M266,432 Q267,430 268,430.5 M286,404 Q287,402 287.6,402 M303.5,408 Q305,407 306.5,408 M199,448 Q194,446 190.2,447.5" fill="none" stroke="#333" stroke-width="0.8"/>
<line x1="164.6" y1="461.5" x2="330.4" y2="360.5" stroke="#222" stroke-width="1.1"/>
<line x1="166" y1="465" x2="331" y2="364.5" stroke="#555" stroke-width="0.6"/>
<line x1="152.8" y1="472" x2="190" y2="451" stroke="#555" stroke-width="0.6"/>
<path d="M171.2,415.5 C173.0,415.2 175.7,417.0 177.8,417.5 C180.0,418.0 182.1,418.0 184.2,418.5 C186.2,419.0 188.9,419.7 190.4,420.6 C192.0,421.5 192.4,422.7 193.7,423.8 C194.9,424.9 197.3,425.6 197.8,427.0 C198.4,428.4 198.0,430.6 196.8,432.2 C195.5,433.8 192.5,435.5 190.4,436.4 C188.3,437.3 185.6,436.6 184.2,437.5 C182.8,438.4 183.5,440.6 182.1,441.7 C180.7,442.8 178.2,443.3 175.8,443.8 C173.3,444.3 169.9,445.2 167.2,444.8 C164.6,444.4 161.5,442.9 159.9,441.7 C158.4,440.5 158.4,439.1 157.8,437.5 C157.3,435.9 157.5,433.6 156.8,432.2 C156.0,430.8 152.7,430.2 153.2,429.0 C153.8,427.8 157.9,426.7 160.2,425.0 C162.6,423.3 165.4,420.6 167.2,419.0 C169.1,417.4 169.5,415.8 171.2,415.5Z" fill="none" stroke="#333" stroke-width="0.85"/>
<path d="M147.2,432.0 C148.6,431.1 152.6,428.2 155.2,426.5 C157.9,424.8 161.1,423.8 163.2,422.0 C165.4,420.2 166.6,417.5 168.2,416.0 C169.9,414.5 171.2,413.2 173.2,413.0 C175.2,412.8 178.2,414.5 180.2,415.0 C182.2,415.5 183.4,415.5 185.2,416.0 C187.1,416.5 190.2,417.7 191.2,418.0" fill="none" stroke="#444" stroke-width="0.7"/>
<path d="M209.5,393.2 C211.3,392.9 213.9,394.7 216.1,395.2 C218.2,395.7 220.3,395.7 222.4,396.2 C224.5,396.7 227.1,397.4 228.7,398.3 C230.3,399.2 230.7,400.4 231.9,401.5 C233.1,402.6 235.6,403.3 236.1,404.7 C236.6,406.1 236.2,408.3 235.0,409.9 C233.8,411.5 230.8,413.2 228.7,414.1 C226.6,415.0 223.8,414.3 222.4,415.2 C221.0,416.1 221.7,418.3 220.3,419.4 C218.9,420.4 216.5,421.0 214.0,421.5 C211.5,422.0 208.1,422.9 205.5,422.5 C202.9,422.1 199.8,420.6 198.2,419.4 C196.6,418.2 196.6,416.8 196.1,415.2 C195.6,413.6 195.8,411.3 195.0,409.9 C194.2,408.5 190.9,407.9 191.5,406.7 C192.1,405.5 196.2,404.4 198.5,402.7 C200.8,401.0 203.7,398.3 205.5,396.7 C207.3,395.1 207.7,393.4 209.5,393.2Z" fill="none" stroke="#333" stroke-width="0.85"/>
<path d="M185.5,409.7 C186.8,408.8 190.8,405.9 193.5,404.2 C196.2,402.5 199.3,401.4 201.5,399.7 C203.7,397.9 204.8,395.2 206.5,393.7 C208.2,392.2 209.5,390.9 211.5,390.7 C213.5,390.5 216.5,392.2 218.5,392.7 C220.5,393.2 221.7,393.2 223.5,393.7 C225.3,394.2 228.5,395.4 229.5,395.7" fill="none" stroke="#444" stroke-width="0.7"/>
<path d="M247.8,370.9 C249.5,370.6 252.2,372.4 254.3,372.9 C256.5,373.4 258.5,373.3 260.6,373.9 C262.8,374.4 265.4,375.1 266.9,376.0 C268.5,376.8 268.9,378.1 270.1,379.2 C271.4,380.2 273.8,381.0 274.4,382.4 C274.9,383.8 274.5,386.0 273.2,387.6 C272.0,389.1 269.1,390.9 266.9,391.8 C264.8,392.6 262.0,392.0 260.6,392.9 C259.2,393.7 259.9,396.0 258.6,397.1 C257.2,398.1 254.7,398.6 252.2,399.2 C249.8,399.7 246.4,400.5 243.8,400.2 C241.1,399.8 238.0,398.3 236.4,397.1 C234.9,395.8 234.9,394.4 234.3,392.9 C233.8,391.3 234.0,389.0 233.2,387.6 C232.5,386.1 229.2,385.6 229.8,384.4 C230.3,383.2 234.4,382.0 236.8,380.4 C239.1,378.7 241.9,375.9 243.8,374.4 C245.6,372.8 246.0,371.1 247.8,370.9Z" fill="none" stroke="#333" stroke-width="0.85"/>
<path d="M223.8,387.4 C225.1,386.4 229.1,383.5 231.8,381.9 C234.4,380.2 237.6,379.1 239.8,377.4 C241.9,375.6 243.1,372.9 244.8,371.4 C246.4,369.9 247.8,368.5 249.8,368.4 C251.8,368.2 254.8,369.9 256.8,370.4 C258.8,370.9 259.9,370.9 261.8,371.4 C263.6,371.9 266.8,373.0 267.8,373.4" fill="none" stroke="#444" stroke-width="0.7"/>
<path d="M286.0,348.5 C287.8,348.2 290.5,350.0 292.6,350.5 C294.8,351.0 296.8,351.0 298.9,351.5 C301.0,352.0 303.6,352.7 305.2,353.6 C306.8,354.5 307.2,355.7 308.4,356.8 C309.6,357.9 312.1,358.6 312.6,360.0 C313.1,361.4 312.7,363.6 311.5,365.2 C310.3,366.8 307.3,368.5 305.2,369.4 C303.1,370.3 300.3,369.6 298.9,370.5 C297.5,371.4 298.2,373.6 296.8,374.7 C295.4,375.8 293.0,376.3 290.5,376.8 C288.0,377.3 284.6,378.2 282.0,377.8 C279.4,377.4 276.3,375.9 274.7,374.7 C273.1,373.5 273.1,372.1 272.6,370.5 C272.1,368.9 272.3,366.6 271.5,365.2 C270.7,363.8 267.4,363.2 268.0,362.0 C268.6,360.8 272.7,359.7 275.0,358.0 C277.3,356.3 280.2,353.6 282.0,352.0 C283.8,350.4 284.2,348.8 286.0,348.5Z" fill="none" stroke="#333" stroke-width="0.85"/>
<path d="M262.0,365.0 C263.3,364.1 267.3,361.2 270.0,359.5 C272.7,357.8 275.8,356.8 278.0,355.0 C280.2,353.2 281.3,350.5 283.0,349.0 C284.7,347.5 286.0,346.2 288.0,346.0 C290.0,345.8 293.0,347.5 295.0,348.0 C297.0,348.5 298.2,348.5 300.0,349.0 C301.8,349.5 305.0,350.7 306.0,351.0" fill="none" stroke="#444" stroke-width="0.7"/>
<ellipse cx="118.3" cy="452.5" rx="4.5" ry="6.5" fill="none" stroke="#333" stroke-width="0.9"/>
<ellipse cx="118.3" cy="452.5" rx="3" ry="5" fill="none" stroke="#333" stroke-width="0.6"/>
<ellipse cx="88" cy="432" rx="1.4" ry="1.8" fill="none" stroke="#333" stroke-width="0.7"/>
<ellipse cx="97" cy="417" rx="1.4" ry="1.8" fill="none" stroke="#333" stroke-width="0.7"/>
<ellipse cx="91" cy="449" rx="1.4" ry="1.8" fill="none" stroke="#333" stroke-width="0.7"/>
<ellipse cx="99" cy="441" rx="1.4" ry="1.8" fill="none" stroke="#333" stroke-width="0.7"/>
<ellipse cx="110" cy="428" rx="1.4" ry="1.8" fill="none" stroke="#333" stroke-width="0.7"/>
<ellipse cx="88" cy="422" rx="1.4" ry="1.8" fill="none" stroke="#333" stroke-width="0.7"/>
<ellipse cx="115.1" cy="405.4" rx="9.5" ry="5.8" fill="none" stroke="#333" stroke-width="0.9"/>
<path d="M107.0,403.4 A8.1,2.6 0 0 0 123.2,403.4" fill="none" stroke="#444" stroke-width="0.7200000000000001"/>
<ellipse cx="157.8" cy="382.5" rx="9.5" ry="5.8" fill="none" stroke="#333" stroke-width="0.9"/>
<path d="M149.7,380.5 A8.1,2.6 0 0 0 165.9,380.5" fill="none" stroke="#444" stroke-width="0.7200000000000001"/>
<ellipse cx="193.7" cy="361" rx="9.5" ry="5.8" fill="none" stroke="#333" stroke-width="0.9"/>
<path d="M185.6,359.0 A8.1,2.6 0 0 0 201.8,359.0" fill="none" stroke="#444" stroke-width="0.7200000000000001"/>
<ellipse cx="231.6" cy="338.7" rx="9.5" ry="5.8" fill="none" stroke="#333" stroke-width="0.9"/>
<path d="M223.5,336.7 A8.1,2.6 0 0 0 239.7,336.7" fill="none" stroke="#444" stroke-width="0.7200000000000001"/>
<ellipse cx="132.5" cy="395.8" rx="4" ry="2.6" fill="none" stroke="#333" stroke-width="0.85"/>
<path d="M129.1,394.9 A3.4,1.2 0 0 0 135.9,394.9" fill="none" stroke="#444" stroke-width="0.68"/>
<ellipse cx="152.2" cy="395.8" rx="4" ry="2.6" fill="none" stroke="#333" stroke-width="0.85"/>
<path d="M148.8,394.9 A3.4,1.2 0 0 0 155.6,394.9" fill="none" stroke="#444" stroke-width="0.68"/>
<ellipse cx="137.3" cy="409.2" rx="4" ry="2.6" fill="none" stroke="#333" stroke-width="0.85"/>
<path d="M133.9,408.3 A3.4,1.2 0 0 0 140.7,408.3" fill="none" stroke="#444" stroke-width="0.68"/>
<ellipse cx="138.8" cy="416" rx="4" ry="2.6" fill="none" stroke="#333" stroke-width="0.85"/>
<path d="M135.4,415.1 A3.4,1.2 0 0 0 142.2,415.1" fill="none" stroke="#444" stroke-width="0.68"/>
<ellipse cx="162.5" cy="413" rx="4" ry="2.6" fill="none" stroke="#333" stroke-width="0.85"/>
<path d="M159.1,412.1 A3.4,1.2 0 0 0 165.9,412.1" fill="none" stroke="#444" stroke-width="0.68"/>
<ellipse cx="168.8" cy="422.3" rx="4" ry="2.6" fill="none" stroke="#333" stroke-width="0.85"/>
<path d="M165.4,421.4 A3.4,1.2 0 0 0 172.2,421.4" fill="none" stroke="#444" stroke-width="0.68"/>
<ellipse cx="153" cy="425.7" rx="4" ry="2.6" fill="none" stroke="#333" stroke-width="0.85"/>
<path d="M149.6,424.8 A3.4,1.2 0 0 0 156.4,424.8" fill="none" stroke="#444" stroke-width="0.68"/>
<ellipse cx="149" cy="439" rx="4" ry="2.6" fill="none" stroke="#333" stroke-width="0.85"/>
<path d="M145.6,438.1 A3.4,1.2 0 0 0 152.4,438.1" fill="none" stroke="#444" stroke-width="0.68"/>
<ellipse cx="191.6" cy="402.9" rx="4" ry="2.6" fill="none" stroke="#333" stroke-width="0.85"/>
<path d="M188.2,402.0 A3.4,1.2 0 0 0 195.0,402.0" fill="none" stroke="#444" stroke-width="0.68"/>
<ellipse cx="189.3" cy="417.8" rx="4" ry="2.6" fill="none" stroke="#333" stroke-width="0.85"/>
<path d="M185.9,416.9 A3.4,1.2 0 0 0 192.7,416.9" fill="none" stroke="#444" stroke-width="0.68"/>
<ellipse cx="177.5" cy="393.4" rx="4" ry="2.6" fill="none" stroke="#333" stroke-width="0.85"/>
<path d="M174.1,392.5 A3.4,1.2 0 0 0 180.9,392.5" fill="none" stroke="#444" stroke-width="0.68"/>
<ellipse cx="175" cy="387" rx="4" ry="2.6" fill="none" stroke="#333" stroke-width="0.85"/>
<path d="M171.6,386.1 A3.4,1.2 0 0 0 178.4,386.1" fill="none" stroke="#444" stroke-width="0.68"/>
<ellipse cx="186" cy="385.5" rx="4" ry="2.6" fill="none" stroke="#333" stroke-width="0.85"/>
<path d="M182.6,384.6 A3.4,1.2 0 0 0 189.4,384.6" fill="none" stroke="#444" stroke-width="0.68"/>
<ellipse cx="266.6" cy="321.6" rx="4" ry="2.6" fill="none" stroke="#333" stroke-width="0.85"/>
<path d="M263.2,320.7 A3.4,1.2 0 0 0 270.0,320.7" fill="none" stroke="#444" stroke-width="0.68"/>
<ellipse cx="270" cy="330.7" rx="4" ry="2.6" fill="none" stroke="#333" stroke-width="0.85"/>
<path d="M266.6,329.8 A3.4,1.2 0 0 0 273.4,329.8" fill="none" stroke="#444" stroke-width="0.68"/>
<ellipse cx="277.7" cy="346" rx="4" ry="2.6" fill="none" stroke="#333" stroke-width="0.85"/>
<path d="M274.3,345.1 A3.4,1.2 0 0 0 281.1,345.1" fill="none" stroke="#444" stroke-width="0.68"/>
<ellipse cx="263.2" cy="341.3" rx="4" ry="2.6" fill="none" stroke="#333" stroke-width="0.85"/>
<path d="M259.8,340.4 A3.4,1.2 0 0 0 266.6,340.4" fill="none" stroke="#444" stroke-width="0.68"/>
<ellipse cx="253" cy="343" rx="4" ry="2.6" fill="none" stroke="#333" stroke-width="0.85"/>
<path d="M249.6,342.1 A3.4,1.2 0 0 0 256.4,342.1" fill="none" stroke="#444" stroke-width="0.68"/>
<ellipse cx="254.7" cy="349" rx="4" ry="2.6" fill="none" stroke="#333" stroke-width="0.85"/>
<path d="M251.3,348.1 A3.4,1.2 0 0 0 258.1,348.1" fill="none" stroke="#444" stroke-width="0.68"/>
<ellipse cx="209.4" cy="351.5" rx="4" ry="2.6" fill="none" stroke="#333" stroke-width="0.85"/>
<path d="M206.0,350.6 A3.4,1.2 0 0 0 212.8,350.6" fill="none" stroke="#444" stroke-width="0.68"/>
<ellipse cx="229" cy="351.5" rx="4" ry="2.6" fill="none" stroke="#333" stroke-width="0.85"/>
<path d="M225.6,350.6 A3.4,1.2 0 0 0 232.4,350.6" fill="none" stroke="#444" stroke-width="0.68"/>
<ellipse cx="214.5" cy="365" rx="4" ry="2.6" fill="none" stroke="#333" stroke-width="0.85"/>
<path d="M211.1,364.1 A3.4,1.2 0 0 0 217.9,364.1" fill="none" stroke="#444" stroke-width="0.68"/>
<ellipse cx="216.2" cy="371" rx="4" ry="2.6" fill="none" stroke="#333" stroke-width="0.85"/>
<path d="M212.8,370.1 A3.4,1.2 0 0 0 219.6,370.1" fill="none" stroke="#444" stroke-width="0.68"/>
<ellipse cx="224.8" cy="363.5" rx="4" ry="2.6" fill="none" stroke="#333" stroke-width="0.85"/>
<path d="M221.4,362.6 A3.4,1.2 0 0 0 228.2,362.6" fill="none" stroke="#444" stroke-width="0.68"/>
<ellipse cx="230.8" cy="380.5" rx="4" ry="2.6" fill="none" stroke="#333" stroke-width="0.85"/>
<path d="M227.4,379.6 A3.4,1.2 0 0 0 234.2,379.6" fill="none" stroke="#444" stroke-width="0.68"/>
<ellipse cx="245.3" cy="378" rx="4" ry="2.6" fill="none" stroke="#333" stroke-width="0.85"/>
<path d="M241.9,377.1 A3.4,1.2 0 0 0 248.7,377.1" fill="none" stroke="#444" stroke-width="0.68"/>
<ellipse cx="248.7" cy="330" rx="4" ry="2.6" fill="none" stroke="#333" stroke-width="0.85"/>
<path d="M245.3,329.1 A3.4,1.2 0 0 0 252.1,329.1" fill="none" stroke="#444" stroke-width="0.68"/>
<ellipse cx="302.5" cy="349.8" rx="4" ry="2.6" fill="none" stroke="#333" stroke-width="0.85"/>
<path d="M299.1,348.9 A3.4,1.2 0 0 0 305.9,348.9" fill="none" stroke="#444" stroke-width="0.68"/>
<ellipse cx="283.7" cy="357.5" rx="4" ry="2.6" fill="none" stroke="#333" stroke-width="0.85"/>
<path d="M280.3,356.6 A3.4,1.2 0 0 0 287.1,356.6" fill="none" stroke="#444" stroke-width="0.68"/>
<ellipse cx="309" cy="356.6" rx="4" ry="2.6" fill="none" stroke="#333" stroke-width="0.85"/>
<path d="M305.6,355.7 A3.4,1.2 0 0 0 312.4,355.7" fill="none" stroke="#444" stroke-width="0.68"/>
<ellipse cx="283.7" cy="383" rx="4" ry="2.6" fill="none" stroke="#333" stroke-width="0.85"/>
<path d="M280.3,382.1 A3.4,1.2 0 0 0 287.1,382.1" fill="none" stroke="#444" stroke-width="0.68"/>
<ellipse cx="206.8" cy="397.6" rx="4" ry="2.6" fill="none" stroke="#333" stroke-width="0.85"/>
<path d="M203.4,396.7 A3.4,1.2 0 0 0 210.2,396.7" fill="none" stroke="#444" stroke-width="0.68"/>
<ellipse cx="228.2" cy="396" rx="4" ry="2.6" fill="none" stroke="#333" stroke-width="0.85"/>
<path d="M224.8,395.1 A3.4,1.2 0 0 0 231.6,395.1" fill="none" stroke="#444" stroke-width="0.68"/>
<ellipse cx="207" cy="399.6" rx="4" ry="2.6" fill="none" stroke="#333" stroke-width="0.85"/>
<path d="M203.6,398.7 A3.4,1.2 0 0 0 210.4,398.7" fill="none" stroke="#444" stroke-width="0.68"/>
<ellipse cx="227.3" cy="395.9" rx="4" ry="2.6" fill="none" stroke="#333" stroke-width="0.85"/>
<path d="M223.9,395.0 A3.4,1.2 0 0 0 230.7,395.0" fill="none" stroke="#444" stroke-width="0.68"/>
<ellipse cx="201.5" cy="390.4" rx="4" ry="2.6" fill="none" stroke="#333" stroke-width="0.85"/>
<path d="M198.1,389.5 A3.4,1.2 0 0 0 204.9,389.5" fill="none" stroke="#444" stroke-width="0.68"/>
<ellipse cx="192.3" cy="403.2" rx="4" ry="2.6" fill="none" stroke="#333" stroke-width="0.85"/>
<path d="M188.9,402.3 A3.4,1.2 0 0 0 195.7,402.3" fill="none" stroke="#444" stroke-width="0.68"/>
<ellipse cx="188.6" cy="418.9" rx="4" ry="2.6" fill="none" stroke="#333" stroke-width="0.85"/>
<path d="M185.2,418.0 A3.4,1.2 0 0 0 192.0,418.0" fill="none" stroke="#444" stroke-width="0.68"/>
<ellipse cx="245.7" cy="405" rx="4" ry="2.6" fill="none" stroke="#333" stroke-width="0.85"/>
<path d="M242.3,404.1 A3.4,1.2 0 0 0 249.1,404.1" fill="none" stroke="#444" stroke-width="0.68"/>
<ellipse cx="207" cy="428" rx="4" ry="2.6" fill="none" stroke="#333" stroke-width="0.85"/>
<path d="M203.6,427.1 A3.4,1.2 0 0 0 210.4,427.1" fill="none" stroke="#444" stroke-width="0.68"/>
<ellipse cx="147.5" cy="407.6" rx="2.2" ry="1.5" fill="#bbb" stroke="#333" stroke-width="1.0"/>
<ellipse cx="124.6" cy="421.8" rx="2.2" ry="1.5" fill="#bbb" stroke="#333" stroke-width="1.0"/>
<ellipse cx="134" cy="422.6" rx="2.2" ry="1.5" fill="#bbb" stroke="#333" stroke-width="1.0"/>
<ellipse cx="115.2" cy="420.2" rx="2.2" ry="1.5" fill="#bbb" stroke="#333" stroke-width="1.0"/>
<ellipse cx="162.5" cy="399" rx="2.2" ry="1.5" fill="#bbb" stroke="#333" stroke-width="1.0"/>
<ellipse cx="172" cy="399.7" rx="2.2" ry="1.5" fill="#bbb" stroke="#333" stroke-width="1.0"/>
<ellipse cx="182" cy="413.9" rx="2.2" ry="1.5" fill="#bbb" stroke="#333" stroke-width="1.0"/>
<ellipse cx="294" cy="347" rx="2.2" ry="1.5" fill="#bbb" stroke="#333" stroke-width="1.0"/>
<ellipse cx="267.5" cy="373.7" rx="2.2" ry="1.5" fill="#bbb" stroke="#333" stroke-width="1.0"/>
<ellipse cx="236.7" cy="399.3" rx="2.2" ry="1.5" fill="#bbb" stroke="#333" stroke-width="1.0"/>
<ellipse cx="245.3" cy="406.2" rx="2.2" ry="1.5" fill="#bbb" stroke="#333" stroke-width="1.0"/>
<ellipse cx="282.5" cy="383.9" rx="2.2" ry="1.5" fill="#bbb" stroke="#333" stroke-width="1.0"/>
<ellipse cx="162.9" cy="398.6" rx="2.2" ry="1.5" fill="#bbb" stroke="#333" stroke-width="1.0"/>
<ellipse cx="323" cy="360" rx="2.2" ry="1.5" fill="#bbb" stroke="#333" stroke-width="1.0"/>
<ellipse cx="143.6" cy="448.6" rx="2.2" ry="1.5" fill="#bbb" stroke="#333" stroke-width="1.0"/>
<ellipse cx="265" cy="372.9" rx="2.2" ry="1.5" fill="#bbb" stroke="#333" stroke-width="1.0"/>
<polyline points="37.5,263 37.5,328.6 115.7,372.8 115.7,420" fill="none" stroke="#555" stroke-width="0.8" stroke-linejoin="round" stroke-dasharray="20,4"/>
<polyline points="43,358 107,395 122,404" fill="none" stroke="#555" stroke-width="0.8" stroke-linejoin="round" stroke-dasharray="20,4"/>
<polyline points="370.6,278 370.6,299.5 295.8,341.5" fill="none" stroke="#555" stroke-width="0.8" stroke-linejoin="round" stroke-dasharray="20,4"/>
<polyline points="295.8,341.5 266,358 266,374" fill="none" stroke="#555" stroke-width="0.8" stroke-linejoin="round"/>
<line x1="237.5" y1="178" x2="237.5" y2="377" stroke="#444" stroke-width="0.8" stroke-dasharray="23,3"/>
<rect x="34.5" y="224" width="6.5" height="38" rx="2" fill="#fff" stroke="#333" stroke-width="0.9"/>
<line x1="34.5" y1="233" x2="41" y2="233" stroke="#555" stroke-width="0.6"/>
<line x1="34.5" y1="236" x2="41" y2="236" stroke="#555" stroke-width="0.6"/>
<line x1="34.5" y1="239" x2="41" y2="239" stroke="#555" stroke-width="0.6"/>
<line x1="34.5" y1="242" x2="41" y2="242" stroke="#555" stroke-width="0.6"/>
<line x1="34.5" y1="245" x2="41" y2="245" stroke="#555" stroke-width="0.6"/>
<line x1="34.5" y1="248" x2="41" y2="248" stroke="#555" stroke-width="0.6"/>
<line x1="34.5" y1="251" x2="41" y2="251" stroke="#555" stroke-width="0.6"/>
<line x1="34.5" y1="254" x2="41" y2="254" stroke="#555" stroke-width="0.6"/>
<line x1="34.5" y1="257" x2="41" y2="257" stroke="#555" stroke-width="0.6"/>
<line x1="34.5" y1="260" x2="41" y2="260" stroke="#555" stroke-width="0.6"/>
<line x1="52" y1="210" x2="57" y2="207" stroke="#444" stroke-width="0.7"/>
<text x="62.5" y="205.8" font-size="8.6" text-anchor="middle" fill="#333" font-family="Liberation Sans">26</text>
<rect x="367" y="207" width="7" height="69.5" rx="1.5" fill="#fff" stroke="#333" stroke-width="0.9"/>
<ellipse cx="370.6" cy="205" rx="7" ry="3.6" fill="#fff" stroke="#333" stroke-width="1.0"/>
<path d="M365.6,204 V199.5 L367.6,196.8 H373.6 L375.6,199.5 V204" fill="#fff" stroke="#333" stroke-width="0.9"/>
<ellipse cx="370.6" cy="198.6" rx="3.6" ry="1.6" fill="none" stroke="#333" stroke-width="0.7"/>
<line x1="370.6" y1="199.5" x2="370.6" y2="203.5" stroke="#666" stroke-width="0.6"/>
<line x1="367" y1="242" x2="374" y2="242" stroke="#444" stroke-width="0.7"/>
<path d="M367,244.5 Q370.5,246.1 374,244.5" fill="none" stroke="#555" stroke-width="0.7"/>
<path d="M367,247.4 Q370.5,249.0 374,247.4" fill="none" stroke="#555" stroke-width="0.7"/>
<path d="M367,250.3 Q370.5,251.9 374,250.3" fill="none" stroke="#555" stroke-width="0.7"/>
<path d="M367,253.2 Q370.5,254.79999999999998 374,253.2" fill="none" stroke="#555" stroke-width="0.7"/>
<path d="M367,256.1 Q370.5,257.70000000000005 374,256.1" fill="none" stroke="#555" stroke-width="0.7"/>
<path d="M367,259.0 Q370.5,260.6 374,259.0" fill="none" stroke="#555" stroke-width="0.7"/>
<path d="M367,261.9 Q370.5,263.5 374,261.9" fill="none" stroke="#555" stroke-width="0.7"/>
<path d="M367,264.8 Q370.5,266.40000000000003 374,264.8" fill="none" stroke="#555" stroke-width="0.7"/>
<path d="M367,267.7 Q370.5,269.3 374,267.7" fill="none" stroke="#555" stroke-width="0.7"/>
<path d="M367,270.6 Q370.5,272.20000000000005 374,270.6" fill="none" stroke="#555" stroke-width="0.7"/>
<path d="M367,273.5 Q370.5,275.1 374,273.5" fill="none" stroke="#555" stroke-width="0.7"/>
<line x1="374" y1="227.2" x2="396.8" y2="226.2" stroke="#444" stroke-width="0.7"/>
<text x="404.9" y="229.8" font-size="8.6" text-anchor="middle" fill="#333" font-family="Liberation Sans">27</text>
<g transform="rotate(28.5 33.6 352.7)"><rect x="22.6" y="350.4" width="22" height="4.6" rx="2" fill="#fff" stroke="#333" stroke-width="0.9"/><rect x="23" y="350.8" width="6" height="3.8" fill="#666"/><rect x="37" y="350.8" width="7" height="3.8" fill="#666"/></g>
<line x1="26" y1="362" x2="32" y2="354" stroke="#444" stroke-width="0.7"/>
<text x="23.4" y="370.6" font-size="8.6" text-anchor="middle" fill="#333" font-family="Liberation Sans">28</text>
<path d="M233.8,172.0 V177.0 A3.2,1.4400000000000002 0 0 0 240.2,177.0 V172.0" fill="#fff" stroke="#333" stroke-width="0.9"/>
<ellipse cx="237" cy="172.0" rx="3.2" ry="1.4400000000000002" fill="#fff" stroke="#333" stroke-width="0.9"/>
<line x1="241" y1="173.5" x2="252" y2="172" stroke="#444" stroke-width="0.7"/>
<text x="261" y="175.3" font-size="8.6" text-anchor="middle" fill="#333" font-family="Liberation Sans">29</text>
<path d="M188.5,191.5 V195.5 A3.5,1.575 0 0 0 195.5,195.5 V191.5" fill="#fff" stroke="#333" stroke-width="0.9"/>
<ellipse cx="192" cy="191.5" rx="3.5" ry="1.575" fill="#fff" stroke="#333" stroke-width="0.9"/>
<line x1="196" y1="193" x2="217" y2="191.5" stroke="#444" stroke-width="0.7"/>
<rect x="220.0" y="187.3" width="12" height="9" fill="#ffff00"/>
<text x="226" y="195.10000000000002" font-size="8.6" text-anchor="middle" fill="#333" font-family="Liberation Sans">24</text>
<g fill="#fff" stroke="#222" stroke-width="1"><path d="M192.5,207.0 V203.1 Q192.5,200.5 195.2,200.5 Q197.9,200.5 197.9,203.1 V207.0"/><path d="M187.5,203.8 V207.9 Q187.5,209.4 189.9,209.4 Q192.3,209.4 192.3,207.9 V203.8"/><ellipse cx="189.9" cy="203.8" rx="2.4" ry="1"/></g>
<line x1="196" y1="205" x2="217" y2="203" stroke="#444" stroke-width="0.7"/>
<rect x="220.0" y="198.1" width="12" height="9" fill="#ffff00"/>
<text x="226" y="205.9" font-size="8.6" text-anchor="middle" fill="#333" font-family="Liberation Sans">23</text>
<ellipse cx="192" cy="218.7" rx="8.6" ry="5.2" fill="#fff" stroke="#333" stroke-width="1.0"/>
<ellipse cx="192" cy="217.5" rx="8.6" ry="5.2" fill="#fff" stroke="#333" stroke-width="1.2"/>
<ellipse cx="192" cy="217.8" rx="4.6" ry="2.8" fill="none" stroke="#333" stroke-width="1.1"/>
<path d="M188.2,218.7 A3.8,2 0 0 0 195.8,218.7" fill="none" stroke="#777" stroke-width="1.6"/>
<line x1="200" y1="218" x2="217" y2="216" stroke="#444" stroke-width="0.7"/>
<rect x="220.0" y="211.1" width="12" height="9" fill="#ffff00"/>
<text x="226" y="218.9" font-size="8.6" text-anchor="middle" fill="#333" font-family="Liberation Sans">22</text>
<path d="M182.5,233.5 Q181.9,240.25 183.3,249 L197.7,249 Q199.1,240.25 198.5,233.5Z" fill="#fff"/>
<ellipse cx="190.5" cy="233.0" rx="8" ry="3.2" fill="#fff" stroke="#222" stroke-width="1.0"/>
<ellipse cx="190.5" cy="234.0" rx="5.6" ry="2.0" fill="none" stroke="#333" stroke-width="0.9"/>
<path d="M182.5,234.5 A8,3 0 0 0 198.5,234.5" fill="none" stroke="#222" stroke-width="0.95"/>
<path d="M182.5,236.5 A8,3 0 0 0 198.5,236.5" fill="none" stroke="#222" stroke-width="0.95"/>
<path d="M182.5,238.5 A8,3 0 0 0 198.5,238.5" fill="none" stroke="#222" stroke-width="0.95"/>
<path d="M182.5,240.5 A8,3 0 0 0 198.5,240.5" fill="none" stroke="#222" stroke-width="0.95"/>
<path d="M182.5,242.5 A8,3 0 0 0 198.5,242.5" fill="none" stroke="#222" stroke-width="0.95"/>
<path d="M182.5,244.5 A8,3 0 0 0 198.5,244.5" fill="none" stroke="#222" stroke-width="0.95"/>
<path d="M182.5,246.5 A8,3 0 0 0 198.5,246.5" fill="none" stroke="#222" stroke-width="0.95"/>
<path d="M182.5,248.5 A8,3 0 0 0 198.5,248.5" fill="none" stroke="#222" stroke-width="0.95"/>
<line x1="182.5" y1="233.0" x2="183.0" y2="248" stroke="#333" stroke-width="0.9"/>
<line x1="198.5" y1="233.0" x2="198.0" y2="248" stroke="#333" stroke-width="0.9"/>
<line x1="199" y1="241" x2="217" y2="238.5" stroke="#444" stroke-width="0.7"/>
<rect x="219.0" y="233.5" width="12" height="9" fill="#ffff00"/>
<text x="225" y="241.3" font-size="8.6" text-anchor="middle" fill="#333" font-family="Liberation Sans">21</text>
<ellipse cx="192" cy="266.7" rx="8.6" ry="5.2" fill="#fff" stroke="#333" stroke-width="1.0"/>
<ellipse cx="192" cy="265.5" rx="8.6" ry="5.2" fill="#fff" stroke="#333" stroke-width="1.2"/>
<ellipse cx="192" cy="265.8" rx="4.6" ry="2.8" fill="none" stroke="#333" stroke-width="1.1"/>
<path d="M188.2,266.7 A3.8,2 0 0 0 195.8,266.7" fill="none" stroke="#777" stroke-width="1.6"/>
<line x1="200" y1="266" x2="217" y2="264" stroke="#444" stroke-width="0.7"/>
<rect x="219.0" y="259.0" width="12" height="9" fill="#ffff00"/>
<text x="225" y="266.8" font-size="8.6" text-anchor="middle" fill="#333" font-family="Liberation Sans">20</text>
<rect x="189" y="275.0" width="8" height="7.5" rx="3" fill="#fff" stroke="#222" stroke-width="1"/>
<ellipse cx="193" cy="276.7" rx="3.6" ry="1.6" fill="none" stroke="#333" stroke-width="0.9"/>
<line x1="189" y1="279.5" x2="197" y2="279.5" stroke="#333" stroke-width="0.8"/>
<line x1="189.2" y1="281.1" x2="196.8" y2="281.1" stroke="#444" stroke-width="0.7"/>
<line x1="197" y1="279" x2="217" y2="276.5" stroke="#444" stroke-width="0.7"/>
<rect x="219.0" y="271.8" width="12" height="9" fill="#ffff00"/>
<text x="225" y="279.6" font-size="8.6" text-anchor="middle" fill="#333" font-family="Liberation Sans">19</text>
<path d="M136.1,236.0 V240.0 A3.5,1.575 0 0 0 143.1,240.0 V236.0" fill="#fff" stroke="#333" stroke-width="0.9"/>
<ellipse cx="139.6" cy="236.0" rx="3.5" ry="1.575" fill="#fff" stroke="#333" stroke-width="0.9"/>
<line x1="116" y1="236" x2="135" y2="238" stroke="#444" stroke-width="0.7"/>
<rect x="105.0" y="231.1" width="10" height="9" fill="#ffff00"/>
<text x="110" y="238.9" font-size="8.6" text-anchor="middle" fill="#333" font-family="Liberation Sans">17</text>
<g fill="#fff" stroke="#222" stroke-width="1"><path d="M142,254.1 V250.2 Q142,247.6 144.7,247.6 Q147.4,247.6 147.4,250.2 V254.1"/><path d="M137,250.9 V255.0 Q137,256.5 139.4,256.5 Q141.8,256.5 141.8,255.0 V250.9"/><ellipse cx="139.4" cy="250.9" rx="2.4" ry="1"/></g>
<line x1="116" y1="250" x2="137" y2="253" stroke="#444" stroke-width="0.7"/>
<rect x="104.5" y="245.1" width="11" height="9" fill="#f08080"/>
<text x="110" y="252.9" font-size="8.6" text-anchor="middle" fill="#333" font-family="Liberation Sans">16</text>
<ellipse cx="140.8" cy="264.7" rx="8.6" ry="5.2" fill="#fff" stroke="#333" stroke-width="1.0"/>
<ellipse cx="140.8" cy="263.5" rx="8.6" ry="5.2" fill="#fff" stroke="#333" stroke-width="1.2"/>
<ellipse cx="140.8" cy="263.8" rx="4.6" ry="2.8" fill="none" stroke="#333" stroke-width="1.1"/>
<path d="M137.0,264.7 A3.8,2 0 0 0 144.60000000000002,264.7" fill="none" stroke="#777" stroke-width="1.6"/>
<line x1="116" y1="263" x2="132" y2="265" stroke="#444" stroke-width="0.7"/>
<rect x="105.0" y="258.1" width="10" height="9" fill="#ffff00"/>
<text x="110" y="265.90000000000003" font-size="8.6" text-anchor="middle" fill="#333" font-family="Liberation Sans">15</text>
<path d="M133.5,281.5 Q132.9,288.5 134.3,297.5 L149.7,297.5 Q151.1,288.5 150.5,281.5Z" fill="#fff"/>
<ellipse cx="142" cy="281.0" rx="8.5" ry="3.2" fill="#fff" stroke="#222" stroke-width="1.0"/>
<ellipse cx="142" cy="282.0" rx="5.949999999999999" ry="2.0" fill="none" stroke="#333" stroke-width="0.9"/>
<path d="M133.5,282.5 A8.5,3 0 0 0 150.5,282.5" fill="none" stroke="#222" stroke-width="0.95"/>
<path d="M133.5,284.57142857142856 A8.5,3 0 0 0 150.5,284.57142857142856" fill="none" stroke="#222" stroke-width="0.95"/>
<path d="M133.5,286.64285714285717 A8.5,3 0 0 0 150.5,286.64285714285717" fill="none" stroke="#222" stroke-width="0.95"/>
<path d="M133.5,288.7142857142857 A8.5,3 0 0 0 150.5,288.7142857142857" fill="none" stroke="#222" stroke-width="0.95"/>
<path d="M133.5,290.7857142857143 A8.5,3 0 0 0 150.5,290.7857142857143" fill="none" stroke="#222" stroke-width="0.95"/>
<path d="M133.5,292.85714285714283 A8.5,3 0 0 0 150.5,292.85714285714283" fill="none" stroke="#222" stroke-width="0.95"/>
<path d="M133.5,294.92857142857144 A8.5,3 0 0 0 150.5,294.92857142857144" fill="none" stroke="#222" stroke-width="0.95"/>
<path d="M133.5,297.0 A8.5,3 0 0 0 150.5,297.0" fill="none" stroke="#222" stroke-width="0.95"/>
<line x1="133.5" y1="281.0" x2="134.0" y2="296.5" stroke="#333" stroke-width="0.9"/>
<line x1="150.5" y1="281.0" x2="150.0" y2="296.5" stroke="#333" stroke-width="0.9"/>
<line x1="116" y1="287" x2="133" y2="289" stroke="#444" stroke-width="0.7"/>
<rect x="105.0" y="282.3" width="10" height="9" fill="#ffff00"/>
<text x="110" y="290.1" font-size="8.6" text-anchor="middle" fill="#333" font-family="Liberation Sans">14</text>
<ellipse cx="140.8" cy="312.2" rx="8.6" ry="5.2" fill="#fff" stroke="#333" stroke-width="1.0"/>
<ellipse cx="140.8" cy="311" rx="8.6" ry="5.2" fill="#fff" stroke="#333" stroke-width="1.2"/>
<ellipse cx="140.8" cy="311.3" rx="4.6" ry="2.8" fill="none" stroke="#333" stroke-width="1.1"/>
<path d="M137.0,312.2 A3.8,2 0 0 0 144.60000000000002,312.2" fill="none" stroke="#777" stroke-width="1.6"/>
<line x1="116" y1="310" x2="132" y2="312" stroke="#444" stroke-width="0.7"/>
<rect x="105.0" y="305.1" width="10" height="9" fill="#ffff00"/>
<text x="110" y="312.90000000000003" font-size="8.6" text-anchor="middle" fill="#333" font-family="Liberation Sans">13</text>
<rect x="136" y="321.5" width="8" height="7.5" rx="3" fill="#fff" stroke="#222" stroke-width="1"/>
<ellipse cx="140" cy="323.2" rx="3.6" ry="1.6" fill="none" stroke="#333" stroke-width="0.9"/>
<line x1="136" y1="326" x2="144" y2="326" stroke="#333" stroke-width="0.8"/>
<line x1="136.2" y1="327.6" x2="143.8" y2="327.6" stroke="#444" stroke-width="0.7"/>
<line x1="116" y1="323" x2="136" y2="325" stroke="#444" stroke-width="0.7"/>
<rect x="105.0" y="318.3" width="10" height="9" fill="#ffff00"/>
<text x="110" y="326.1" font-size="8.6" text-anchor="middle" fill="#333" font-family="Liberation Sans">12</text>
<path d="M243,291.1 V296.1 A5,2.25 0 0 0 253,296.1 V291.1" fill="#fff" stroke="#333" stroke-width="0.9"/>
<ellipse cx="248" cy="291.1" rx="5" ry="2.25" fill="#fff" stroke="#333" stroke-width="0.9"/>
<line x1="248.5" y1="297" x2="248.5" y2="328" stroke="#444" stroke-width="0.8"/>
<line x1="253" y1="292" x2="264" y2="289.5" stroke="#444" stroke-width="0.7"/>
<text x="270" y="292.3" font-size="8.6" text-anchor="middle" fill="#333" font-family="Liberation Sans">10</text>
<path d="M189.7,313.5 V335.5 A3,1.6 0 0 0 195.7,335.5 V313.5" fill="#fff" stroke="#333" stroke-width="0.9"/>
<ellipse cx="192.7" cy="313.5" rx="3" ry="1.4" fill="#fff" stroke="#333" stroke-width="0.9"/>
<line x1="196" y1="326" x2="208" y2="323" stroke="#444" stroke-width="0.7"/>
<text x="213.7" y="324.3" font-size="8.6" text-anchor="middle" fill="#333" font-family="Liberation Sans">5</text>
<path d="M137.2,345 V368.5 A3,1.6 0 0 0 143.2,368.5 V345" fill="#fff" stroke="#333" stroke-width="0.9"/>
<ellipse cx="140.2" cy="345" rx="3" ry="1.4" fill="#fff" stroke="#333" stroke-width="0.9"/>
<line x1="143.5" y1="358" x2="158" y2="355" stroke="#444" stroke-width="0.7"/>
<text x="163.8" y="358.0" font-size="8.6" text-anchor="middle" fill="#333" font-family="Liberation Sans">4</text>
<line x1="303.6" y1="289" x2="295.8" y2="297" stroke="#444" stroke-width="0.7"/>
<rect x="303.35" y="278.8" width="8.5" height="9" fill="#00ee00"/>
<text x="307.6" y="286.6" font-size="8.6" text-anchor="middle" fill="#333" font-family="Liberation Sans">2</text>
<line x1="284" y1="316" x2="280" y2="323" stroke="#444" stroke-width="0.7"/>
<text x="287.4" y="313.3" font-size="8.6" text-anchor="middle" fill="#333" font-family="Liberation Sans">3</text>
<ellipse cx="66.3" cy="396.5" rx="4" ry="5" fill="#fff" stroke="#333" stroke-width="1.2" transform="rotate(20 66.3 396.5)"/>
<ellipse cx="67.8" cy="397.2" rx="2.6" ry="3.8" fill="none" stroke="#333" stroke-width="0.8" transform="rotate(20 67.8 397.2)"/>
<line x1="70" y1="399" x2="86" y2="408" stroke="#444" stroke-width="0.7"/>
<line x1="63" y1="412" x2="66" y2="402" stroke="#444" stroke-width="0.7"/>
<text x="61.6" y="420.3" font-size="8.6" text-anchor="middle" fill="#333" font-family="Liberation Sans">9</text>
<ellipse cx="75.5" cy="478.5" rx="5.8" ry="7.2" fill="#fff" stroke="#333" stroke-width="1.1" transform="rotate(-30 75.5 478.5)"/>
<polygon points="72.5,472.3 75.5,469.3 84.5,481.7 81.5,484.7" fill="#fff"/>
<ellipse cx="78.5" cy="475.5" rx="5.8" ry="7.2" fill="#fff" stroke="#333" stroke-width="1.1" transform="rotate(-30 78.5 475.5)"/>
<ellipse cx="78.8" cy="475.3" rx="4.2" ry="5.6" fill="none" stroke="#333" stroke-width="0.7" transform="rotate(-30 78.8 475.3)"/>
<line x1="66" y1="468" x2="71" y2="472" stroke="#444" stroke-width="0.7"/>
<line x1="84" y1="472" x2="120" y2="452" stroke="#444" stroke-width="0.7"/>
<text x="62" y="468.3" font-size="8.6" text-anchor="middle" fill="#333" font-family="Liberation Sans">8</text>
<path d="M181.5,490 V493 A10.5,6.5 0 0 0 202.5,493 V490" fill="#fff" stroke="#333" stroke-width="1.1"/>
<ellipse cx="192" cy="490" rx="10.5" ry="6.2" fill="#fff" stroke="#333" stroke-width="1.1"/>
<ellipse cx="192" cy="490.5" rx="8.3" ry="4.4" fill="none" stroke="#333" stroke-width="0.9"/>
<line x1="203" y1="491" x2="213" y2="488.5" stroke="#444" stroke-width="0.7"/>
<text x="219.5" y="491.3" font-size="8.6" text-anchor="middle" fill="#333" font-family="Liberation Sans">7</text>
<path d="M129.6,525 V528.5 A11.3,6.3 0 0 0 152.2,528.5 V525" fill="#fff" stroke="#333" stroke-width="1.1"/>
<ellipse cx="140.9" cy="525" rx="11.3" ry="6.3" fill="#fff" stroke="#333" stroke-width="1.1"/>
<ellipse cx="140.9" cy="525.6" rx="9" ry="4.6" fill="none" stroke="#333" stroke-width="0.9"/>
<line x1="152" y1="524" x2="165" y2="518" stroke="#444" stroke-width="0.7"/>
<text x="171" y="519.9" font-size="8.6" text-anchor="middle" fill="#333" font-family="Liberation Sans">6</text>
<path d="M130.5,609.7 L130.5,611.2 A10.5,5.04 0 0 0 151.5,611.2 L151.5,609.7Z" fill="#fff" stroke="#333" stroke-width="1"/>
<ellipse cx="141" cy="609.7" rx="10.5" ry="4.83" fill="#fff" stroke="#333" stroke-width="1.0"/>
<path d="M138.8,557 V602.7 Q138.6,608.2 135.5,609.2 M143.2,557 V602.7 Q143.4,608.2 146.5,609.2" fill="none" stroke="#333" stroke-width="0.9"/>
<rect x="138.8" y="555" width="4.4" height="5" rx="1.8" fill="#fff" stroke="#333" stroke-width="0.8"/>
<line x1="138.8" y1="558.5" x2="143.2" y2="558.5" stroke="#444" stroke-width="0.6"/>
<line x1="112" y1="572" x2="138" y2="576" stroke="#444" stroke-width="0.7"/>
<rect x="100.6" y="567.1" width="10" height="9" fill="#ffff00"/>
<text x="105.6" y="574.9" font-size="8.6" text-anchor="middle" fill="#333" font-family="Liberation Sans">11</text>
<path d="M183.5,580 L183.5,581.5 A9.5,4.56 0 0 0 202.5,581.5 L202.5,580Z" fill="#fff" stroke="#333" stroke-width="1"/>
<ellipse cx="193" cy="580" rx="9.5" ry="4.37" fill="#fff" stroke="#333" stroke-width="1.0"/>
<path d="M190.8,527 V573 Q190.6,578.5 187.5,579.5 M195.2,527 V573 Q195.4,578.5 198.5,579.5" fill="none" stroke="#333" stroke-width="0.9"/>
<rect x="190.8" y="525" width="4.4" height="5" rx="1.8" fill="#fff" stroke="#333" stroke-width="0.8"/>
<line x1="190.8" y1="528.5" x2="195.2" y2="528.5" stroke="#444" stroke-width="0.6"/>
<line x1="196" y1="545" x2="216" y2="541.5" stroke="#444" stroke-width="0.7"/>
<rect x="216.7" y="537.4" width="11" height="9" fill="#ffff00"/>
<text x="222.2" y="545.1999999999999" font-size="8.6" text-anchor="middle" fill="#333" font-family="Liberation Sans">18</text>
<polygon points="170.79,641.47 176.19,633.91 183.75,630.67 192.38,629.16 204.26,622.04 209.65,615.99 217.21,614.05 247.44,596.56 250.67,592.25 257.15,591.38 286.3,575.19 289.53,571.3 298.17,570.22 315.44,561.16 318.68,557.7 324.08,557.7 337.03,551.23 342.43,550.79 396.4,582.1 398.56,587.5 382.37,600.88 378.05,603.69 242.04,675.58 231.24,676.44 172.95,645.79" fill="#fff" stroke="#222" stroke-width="1.2" stroke-linejoin="round"/>
<ellipse cx="224.77" cy="646.87" rx="24.8" ry="14" fill="none" stroke="#222" stroke-width="1.1"/>
<ellipse cx="263.63" cy="624.2" rx="24.8" ry="14" fill="none" stroke="#222" stroke-width="1.1"/>
<ellipse cx="302.49" cy="601.96" rx="24.8" ry="14" fill="none" stroke="#222" stroke-width="1.1"/>
<ellipse cx="340.92" cy="579.51" rx="24.8" ry="14" fill="none" stroke="#222" stroke-width="1.1"/>
<ellipse cx="343.51" cy="558.78" rx="3.5" ry="2.275" fill="none" stroke="#222" stroke-width="0.9"/>
<ellipse cx="376.97" cy="578.43" rx="4" ry="2.6" fill="none" stroke="#222" stroke-width="0.9"/>
<ellipse cx="379.13" cy="591.81" rx="4.5" ry="2.9250000000000003" fill="none" stroke="#222" stroke-width="0.9"/>
<ellipse cx="361.86" cy="601.53" rx="4.5" ry="2.9250000000000003" fill="none" stroke="#222" stroke-width="0.9"/>
<ellipse cx="348.9" cy="597.86" rx="2.8" ry="1.8199999999999998" fill="none" stroke="#222" stroke-width="0.9"/>
<ellipse cx="340.27" cy="601.96" rx="4" ry="2.6" fill="none" stroke="#222" stroke-width="0.9"/>
<ellipse cx="333.79" cy="606.49" rx="2.5" ry="1.625" fill="none" stroke="#222" stroke-width="0.9"/>
<ellipse cx="340.27" cy="614.48" rx="4.5" ry="2.9250000000000003" fill="none" stroke="#222" stroke-width="0.9"/>
<ellipse cx="302.49" cy="579.94" rx="4" ry="2.6" fill="none" stroke="#222" stroke-width="0.9"/>
<ellipse cx="264.71" cy="602.18" rx="4" ry="2.6" fill="none" stroke="#222" stroke-width="0.9"/>
<ellipse cx="301.41" cy="623.77" rx="3.5" ry="2.275" fill="none" stroke="#222" stroke-width="0.9"/>
<ellipse cx="310.47" cy="620.53" rx="3" ry="1.9500000000000002" fill="none" stroke="#222" stroke-width="0.9"/>
<ellipse cx="294.93" cy="628.51" rx="2.5" ry="1.625" fill="none" stroke="#222" stroke-width="0.9"/>
<ellipse cx="324.08" cy="623.77" rx="4.5" ry="2.9250000000000003" fill="none" stroke="#222" stroke-width="0.9"/>
<ellipse cx="301.41" cy="637.15" rx="4" ry="2.6" fill="none" stroke="#222" stroke-width="0.9"/>
<ellipse cx="225.85" cy="624.2" rx="3.5" ry="2.275" fill="none" stroke="#222" stroke-width="0.9"/>
<ellipse cx="232.32" cy="618.15" rx="2" ry="1.3" fill="none" stroke="#222" stroke-width="0.9"/>
<ellipse cx="263.63" cy="646.22" rx="3.8" ry="2.4699999999999998" fill="none" stroke="#222" stroke-width="0.9"/>
<ellipse cx="271.83" cy="643.2" rx="3" ry="1.9500000000000002" fill="none" stroke="#222" stroke-width="0.9"/>
<ellipse cx="286.3" cy="645.79" rx="4.5" ry="2.9250000000000003" fill="none" stroke="#222" stroke-width="0.9"/>
<ellipse cx="263.2" cy="658.74" rx="4" ry="2.6" fill="none" stroke="#222" stroke-width="0.9"/>
<ellipse cx="222.61" cy="667.37" rx="3.5" ry="2.275" fill="none" stroke="#222" stroke-width="0.9"/>
<ellipse cx="233.4" cy="664.78" rx="2.8" ry="1.8199999999999998" fill="none" stroke="#222" stroke-width="0.9"/>
<ellipse cx="247.44" cy="668.45" rx="4" ry="2.6" fill="none" stroke="#222" stroke-width="0.9"/>
<ellipse cx="189.15" cy="647.51" rx="3.2" ry="2.08" fill="none" stroke="#222" stroke-width="0.9"/>
<ellipse cx="372.65" cy="584.69" rx="1.2" ry="1" fill="#333" stroke="#222" stroke-width="0.6"/>
<ellipse cx="355.38" cy="609.52" rx="1.2" ry="1" fill="#333" stroke="#222" stroke-width="0.6"/>
<ellipse cx="291.69" cy="584.26" rx="1.2" ry="1" fill="#333" stroke="#222" stroke-width="0.6"/>
<ellipse cx="308.96" cy="573.46" rx="1.2" ry="1" fill="#333" stroke="#222" stroke-width="0.6"/>
<ellipse cx="312.2" cy="585.34" rx="1.2" ry="1" fill="#333" stroke="#222" stroke-width="0.6"/>
<ellipse cx="330.55" cy="560.51" rx="1.2" ry="1" fill="#333" stroke="#222" stroke-width="0.6"/>
<ellipse cx="271.18" cy="595.7" rx="1.2" ry="1" fill="#333" stroke="#222" stroke-width="0.6"/>
<ellipse cx="252.83" cy="605.85" rx="1.2" ry="1" fill="#333" stroke="#222" stroke-width="0.6"/>
<ellipse cx="273.34" cy="608.01" rx="1.2" ry="1" fill="#333" stroke="#222" stroke-width="0.6"/>
<ellipse cx="291.69" cy="618.15" rx="1.2" ry="1" fill="#333" stroke="#222" stroke-width="0.6"/>
<ellipse cx="312.2" cy="629.16" rx="1.2" ry="1" fill="#333" stroke="#222" stroke-width="0.6"/>
<ellipse cx="213.97" cy="628.08" rx="1.2" ry="1" fill="#333" stroke="#222" stroke-width="0.6"/>
<ellipse cx="235.56" cy="629.59" rx="1.2" ry="1" fill="#333" stroke="#222" stroke-width="0.6"/>
<ellipse cx="199.94" cy="627.44" rx="1.2" ry="1" fill="#333" stroke="#222" stroke-width="0.6"/>
<ellipse cx="193.46" cy="641.47" rx="1.2" ry="1" fill="#333" stroke="#222" stroke-width="0.6"/>
<ellipse cx="253.91" cy="640.39" rx="1.2" ry="1" fill="#333" stroke="#222" stroke-width="0.6"/>
<ellipse cx="257.15" cy="651.18" rx="1.2" ry="1" fill="#333" stroke="#222" stroke-width="0.6"/>
<ellipse cx="277.66" cy="654.42" rx="1.2" ry="1" fill="#333" stroke="#222" stroke-width="0.6"/>
<g transform="rotate(-26 184.285 638.23)"><rect x="175.285" y="635.23" width="18" height="6" rx="3" fill="none" stroke="#222" stroke-width="0.9"/></g>
<line x1="368.33" y1="565.91" x2="382.37" y2="556.19" stroke="#444" stroke-width="0.7"/>
<text x="388.8" y="556.3" font-size="8.6" text-anchor="middle" fill="#333" font-family="Liberation Sans">25</text>
<text x="362" y="471.3" font-size="8.6" text-anchor="middle" fill="#333" font-family="Liberation Sans">1</text>
<line x1="351" y1="468" x2="357" y2="468" stroke="#444" stroke-width="0.7"/><rect x="1.5" y="27.5" width="49" height="202" fill="#fff" stroke="#a2a2a2" stroke-width="1"/>
<rect x="5" y="31" width="42" height="195" fill="#ababab"/>
<rect x="20" y="43" width="14" height="14" fill="#8f8f8f" opacity="0.6"/><rect x="19.5" y="42.5" width="13" height="13" fill="url(#bg)" stroke="#f8f8f8" stroke-width="1"/>
<path d="M33,45 L35,49 L33,53Z" fill="#f0f0f0"/>
<rect x="21" y="48" width="10" height="2" fill="#555"/><rect x="25" y="44" width="2" height="10" fill="#555"/>
<rect x="20" y="71" width="14" height="14" fill="#8f8f8f" opacity="0.6"/><rect x="19.5" y="70.5" width="13" height="13" fill="url(#bg)" stroke="#f8f8f8" stroke-width="1"/>
<path d="M19,73 L16.5,77 L19,81Z" fill="#f0f0f0"/>
<rect x="21" y="76" width="10" height="2" fill="#555"/>
<rect x="20" y="106" width="14" height="14" fill="#8f8f8f" opacity="0.6"/><rect x="19.5" y="105.5" width="13" height="13" fill="url(#bg)" stroke="#f8f8f8" stroke-width="1"/>
<rect x="21" y="107" width="3.5" height="3.5" fill="#8a8a8a" stroke="#666" stroke-width="0.6"/>
<rect x="21" y="114" width="3.5" height="3.5" fill="#8a8a8a" stroke="#666" stroke-width="0.6"/>
<rect x="28" y="107" width="3.5" height="3.5" fill="#8a8a8a" stroke="#666" stroke-width="0.6"/>
<rect x="28" y="114" width="3.5" height="3.5" fill="#8a8a8a" stroke="#666" stroke-width="0.6"/>
<rect x="20" y="134" width="14" height="14" fill="#8f8f8f" opacity="0.6"/><rect x="19.5" y="133.5" width="13" height="13" fill="url(#bg)" stroke="#f8f8f8" stroke-width="1"/>
<rect x="22.3" y="136.3" width="7.4" height="7.4" fill="#dcdcdc" stroke="#555" stroke-width="1.2"/>
<rect x="23" y="195" width="11" height="16" fill="url(#fade)"/>
<path d="M23.5,195.5 V210.5" stroke="#fff" stroke-width="1"/>
<rect x="17.5" y="195.5" width="4.5" height="4.5" fill="#f2f2f2" stroke="#707070" stroke-width="0.8"/>
<rect x="17.5" y="200.5" width="4.5" height="4.5" fill="#f2f2f2" stroke="#707070" stroke-width="0.8"/>
<rect x="17.5" y="205.5" width="4.5" height="4.5" fill="#f2f2f2" stroke="#707070" stroke-width="0.8"/>
<path d="M25,203 H31" stroke="#444" stroke-width="1.8"/><path d="M30,199.8 L34,203 L30,206.2Z" fill="#444"/></svg>
<!--DRAWING-->
<svg class="a" style="left:0;top:0;opacity:0.93" width="1158" height="761"><g fill="#3d6594"><path transform="translate(531 369)" d="M0,2.5h28v4h-28Z M6.5,0h4v9h-4Z M17.5,0h4v9h-4Z M3.5,9h4v9h-4Z M20.5,9h4v9h-4Z M3.5,9h21v3.6h-21Z M12,6.5h4v12h-4Z M0,14.5h28v4h-28Z M11.5,18 L16.5,18 L9.5,22.5 L0.5,22.5 L0.5,21Z M12,18 L16.5,18 L27.5,21 L27.5,22.5 L18.5,22.5Z"/><path transform="translate(565 369)" d="M11,0 L16.5,0 L27.5,8 L27.5,11 L22,11 L13.7,4.5 L5.5,11 L0,11 L0,8Z M6,7.5h16v3.6h-16Z M2.5,12h22.5v3.6h-22.5Z M11.8,8h4v12h-4Z M5,15.5 L8.8,15.5 L10.5,19.5 L6.8,19.5Z M19,15.5 L22.8,15.5 L21,19.5 L17.2,19.5Z M0,18.8h27.5v3.8h-27.5Z"/><path transform="translate(598 369)" d="M0.5,0.5 L4,0 L9,4.5 L6,6Z M5.5,2 L9.5,3 L9.5,12 L3.5,22.5 L0,21.5 L5.5,12Z M0,8.5 L3,7 L8.5,12 L7.5,14.5Z M9.8,3h3.4v14h-3.4Z M9.8,17 L13.2,17 L11.5,22.5 L8.5,22Z M13.5,0h14.5v3.6h-14.5Z M14,7h3.2v11.5h-3.2Z M24.2,7h3.4v10.5h-3.4Z M14,7h13.6v3h-13.6Z M19.2,2.5h3.6v20h-3.6Z"/></g></svg>
</body></html>
